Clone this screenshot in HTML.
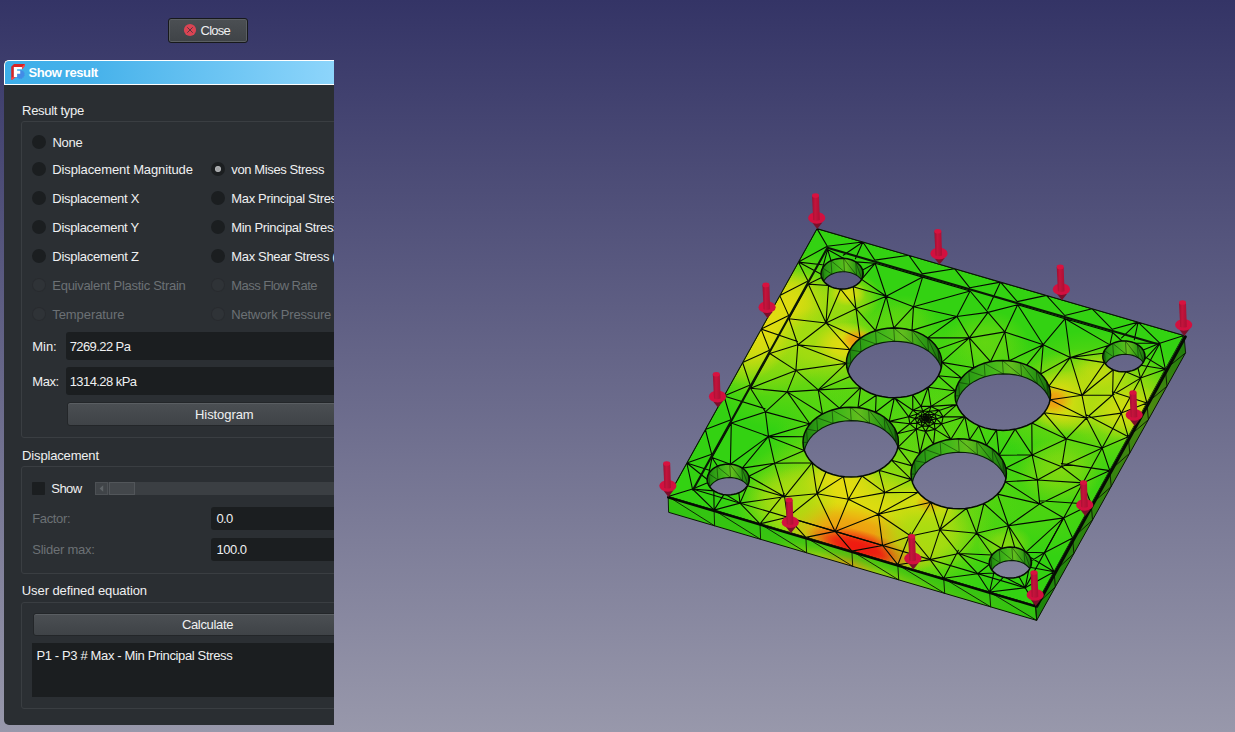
<!DOCTYPE html>
<html><head><meta charset="utf-8"><title>Show result</title>
<style>
html,body{margin:0;padding:0}
body{width:1235px;height:732px;overflow:hidden;position:relative;
 background:linear-gradient(180deg,#343466 0%,#9898ab 100%);
 font-family:'Liberation Sans', sans-serif;font-size:13px;line-height:16px}
#clip{position:absolute;left:0;top:0;width:334px;height:732px;overflow:hidden}
#panel{position:absolute;left:4px;top:60px;width:340px;height:664.5px;background:#2a2e32;border-radius:5px 0 0 5px}
#titlebar{position:absolute;left:4px;top:60px;width:340px;height:23px;border:1px solid #fff;border-right:0;
 border-radius:5px 0 0 0;background:linear-gradient(90deg,#3daee9 0%,#45b1ea 25%,#8dd5fb 100%);
 background-size:329px 100%;background-repeat:no-repeat}
.t{position:absolute;white-space:pre;line-height:16px;font-size:13px}
.gb{position:absolute;left:21px;width:340px;border:1px solid #3a3e42;border-radius:3px;background:#2b2f33;box-sizing:border-box}
.rd{position:absolute;width:14px;height:14px;border-radius:50%;background:#1b1e20;display:block}
.rd b{position:absolute;left:4px;top:4px;width:6px;height:6px;border-radius:50%;background:radial-gradient(#a2a4a6 35%,#c2c4c6 75%)}
.rd.dis{width:13.5px;height:13.5px;background:#2f3337;box-shadow:inset 0 0 0 1px #282b2f}
.inp{position:absolute;background:#1b1e20;border-radius:3px}
.btn{position:absolute;border:1px solid #232629;border-radius:3px;background:linear-gradient(180deg,#4b4f53,#3f4347);box-shadow:inset 0 1px 0 #5a5e62}
#model{position:absolute;left:0;top:0}
</style></head>
<body>
<svg id="model" width="1235" height="732" viewBox="0 0 1235 732">
<defs>
<linearGradient id="shaft" x1="0" x2="1" y1="0" y2="0"><stop offset="0" stop-color="#9c0e30"/><stop offset="0.4" stop-color="#c4143c"/><stop offset="1" stop-color="#ac0f34"/></linearGradient>
<linearGradient id="lside" gradientUnits="userSpaceOnUse" x1="668.2" y1="496.5" x2="1035.5" y2="605.6"><stop offset="0" stop-color="#2ec410"/><stop offset="0.3" stop-color="#3cc410"/><stop offset="0.42" stop-color="#9ad010"/><stop offset="0.5" stop-color="#e09a10"/><stop offset="0.58" stop-color="#9ad010"/><stop offset="0.75" stop-color="#4cc810"/><stop offset="1" stop-color="#30c010"/></linearGradient>
<linearGradient id="rside" gradientUnits="userSpaceOnUse" x1="1035.5" y1="605.6" x2="1184.0" y2="335.5"><stop offset="0" stop-color="#1d860c"/><stop offset="0.55" stop-color="#3a8410"/><stop offset="0.75" stop-color="#4a8a10"/><stop offset="1" stop-color="#1a7c0c"/></linearGradient>
<linearGradient id="lsideov" gradientUnits="userSpaceOnUse" x1="0" y1="0" x2="-4.5" y2="15.5" gradientTransform="translate(668.2 496.5)" spreadMethod="pad"><stop offset="0" stop-color="#34c412" stop-opacity="0.95"/><stop offset="0.45" stop-color="#34c412" stop-opacity="0.7"/><stop offset="1" stop-color="#34c412" stop-opacity="0"/></linearGradient>
<linearGradient id="wall" x1="0" x2="1" y1="0" y2="0"><stop offset="0" stop-color="#1d7a0e"/><stop offset="0.14" stop-color="#2c9c14"/><stop offset="0.4" stop-color="#44b81a"/><stop offset="0.58" stop-color="#62be1e"/><stop offset="0.8" stop-color="#2f9c14"/><stop offset="1" stop-color="#1a6e0c"/></linearGradient>
<radialGradient id="g0"><stop offset="0" stop-color="#74d810" stop-opacity="1"/><stop offset="0.45" stop-color="#74d810" stop-opacity="0.75"/><stop offset="1" stop-color="#74d810" stop-opacity="0"/></radialGradient>
<radialGradient id="g1"><stop offset="0" stop-color="#a8dc10" stop-opacity="1"/><stop offset="0.45" stop-color="#a8dc10" stop-opacity="0.75"/><stop offset="1" stop-color="#a8dc10" stop-opacity="0"/></radialGradient>
<radialGradient id="g2"><stop offset="0" stop-color="#e6dc10" stop-opacity="1"/><stop offset="0.45" stop-color="#e6dc10" stop-opacity="0.75"/><stop offset="1" stop-color="#e6dc10" stop-opacity="0"/></radialGradient>
<radialGradient id="g3"><stop offset="0" stop-color="#f09810" stop-opacity="1"/><stop offset="0.45" stop-color="#f09810" stop-opacity="0.75"/><stop offset="1" stop-color="#f09810" stop-opacity="0"/></radialGradient>
<radialGradient id="g4"><stop offset="0" stop-color="#ee1a10" stop-opacity="1"/><stop offset="0.45" stop-color="#ee1a10" stop-opacity="0.75"/><stop offset="1" stop-color="#ee1a10" stop-opacity="0"/></radialGradient>
<clipPath id="topclip"><path d="M817.0,228.6 L1184.0,335.5 L1035.5,605.6 L668.2,496.5ZM938.3,375.8 L935.6,379.9 L932.2,383.7 L928.1,387.2 L923.5,390.2 L918.3,392.8 L912.7,394.9 L906.8,396.4 L900.7,397.3 L894.5,397.7 L888.2,397.4 L882.1,396.6 L876.2,395.2 L870.6,393.2 L865.3,390.7 L860.6,387.7 L856.5,384.3 L853.0,380.6 L850.1,376.5 L848.1,372.2 L846.8,367.7 L846.4,363.2 L846.7,358.6 L847.9,354.2 L849.9,349.8 L852.6,345.7 L856.0,341.9 L860.1,338.4 L864.8,335.4 L869.9,332.8 L875.5,330.7 L881.4,329.2 L887.5,328.3 L893.7,327.9 L900.0,328.2 L906.1,329.0 L912.0,330.4 L917.6,332.4 L922.9,334.9 L927.6,337.8 L931.7,341.2 L935.2,345.0 L938.0,349.1 L940.1,353.4 L941.4,357.8 L941.8,362.4 L941.5,366.9 L940.3,371.4ZM1047.0,408.4 L1044.3,412.5 L1040.9,416.3 L1036.8,419.8 L1032.2,422.9 L1027.0,425.5 L1021.4,427.5 L1015.5,429.1 L1009.4,430.0 L1003.2,430.4 L997.0,430.1 L990.8,429.3 L984.9,427.9 L979.3,425.9 L974.1,423.4 L969.3,420.4 L965.2,417.0 L961.7,413.2 L958.9,409.2 L956.8,404.8 L955.5,400.4 L955.1,395.8 L955.4,391.3 L956.6,386.8 L958.6,382.4 L961.3,378.3 L964.7,374.5 L968.8,371.0 L973.4,368.0 L978.6,365.4 L984.2,363.3 L990.1,361.8 L996.2,360.8 L1002.4,360.5 L1008.6,360.7 L1014.8,361.5 L1020.7,362.9 L1026.3,364.9 L1031.5,367.4 L1036.3,370.4 L1040.4,373.8 L1043.9,377.5 L1046.7,381.6 L1048.8,385.9 L1050.1,390.4 L1050.5,395.0 L1050.2,399.5 L1049.0,404.0ZM894.9,455.2 L892.2,459.3 L888.8,463.1 L884.7,466.6 L880.1,469.6 L874.9,472.2 L869.3,474.2 L863.4,475.7 L857.3,476.7 L851.1,477.0 L844.8,476.8 L838.7,475.9 L832.8,474.5 L827.2,472.5 L821.9,470.0 L817.2,467.0 L813.1,463.6 L809.5,459.8 L806.7,455.7 L804.7,451.4 L803.4,447.0 L803.0,442.4 L803.3,437.9 L804.5,433.4 L806.5,429.0 L809.2,424.9 L812.6,421.1 L816.7,417.7 L821.3,414.6 L826.5,412.1 L832.1,410.0 L838.0,408.5 L844.1,407.6 L850.3,407.2 L856.6,407.5 L862.7,408.3 L868.6,409.7 L874.2,411.7 L879.5,414.2 L884.2,417.2 L888.3,420.6 L891.8,424.3 L894.7,428.4 L896.7,432.7 L898.0,437.2 L898.4,441.8 L898.1,446.3 L896.9,450.8ZM1002.9,486.9 L1000.2,491.0 L996.8,494.8 L992.7,498.3 L988.1,501.3 L982.9,503.9 L977.3,506.0 L971.4,507.5 L965.3,508.4 L959.1,508.8 L952.9,508.5 L946.7,507.7 L940.8,506.3 L935.2,504.3 L930.0,501.8 L925.2,498.8 L921.1,495.4 L917.6,491.6 L914.7,487.5 L912.7,483.2 L911.4,478.7 L911.0,474.1 L911.3,469.6 L912.5,465.1 L914.5,460.7 L917.2,456.6 L920.6,452.8 L924.7,449.3 L929.3,446.3 L934.5,443.7 L940.1,441.6 L946.0,440.1 L952.1,439.2 L958.3,438.8 L964.5,439.1 L970.7,439.9 L976.6,441.3 L982.2,443.3 L987.4,445.8 L992.2,448.8 L996.3,452.2 L999.8,456.0 L1002.6,460.1 L1004.7,464.4 L1006.0,468.9 L1006.4,473.4 L1006.1,478.0 L1004.9,482.5ZM861.6,279.4 L860.4,281.2 L858.9,282.9 L857.1,284.4 L855.1,285.8 L852.8,286.9 L850.3,287.8 L847.7,288.5 L845.0,288.9 L842.3,289.1 L839.5,289.0 L836.8,288.6 L834.2,288.0 L831.7,287.1 L829.4,286.0 L827.3,284.7 L825.5,283.2 L823.9,281.5 L822.7,279.8 L821.8,277.9 L821.2,275.9 L821.0,273.9 L821.2,271.9 L821.7,269.9 L822.6,268.0 L823.8,266.2 L825.3,264.5 L827.1,263.0 L829.1,261.6 L831.4,260.5 L833.9,259.6 L836.5,258.9 L839.2,258.5 L841.9,258.3 L844.7,258.4 L847.4,258.8 L850.0,259.4 L852.5,260.3 L854.8,261.4 L856.9,262.7 L858.7,264.2 L860.3,265.8 L861.5,267.6 L862.4,269.5 L863.0,271.5 L863.2,273.5 L863.0,275.5 L862.5,277.5ZM1143.4,362.1 L1142.2,363.9 L1140.7,365.6 L1138.9,367.2 L1136.9,368.5 L1134.6,369.7 L1132.1,370.6 L1129.5,371.3 L1126.8,371.7 L1124.1,371.8 L1121.3,371.7 L1118.6,371.4 L1116.0,370.8 L1113.5,369.9 L1111.2,368.8 L1109.1,367.5 L1107.3,366.0 L1105.7,364.3 L1104.5,362.5 L1103.6,360.6 L1103.0,358.6 L1102.8,356.6 L1103.0,354.6 L1103.5,352.6 L1104.4,350.7 L1105.6,348.9 L1107.1,347.2 L1108.9,345.6 L1110.9,344.3 L1113.2,343.1 L1115.7,342.2 L1118.3,341.5 L1121.0,341.1 L1123.7,341.0 L1126.5,341.1 L1129.2,341.4 L1131.8,342.0 L1134.3,342.9 L1136.6,344.0 L1138.7,345.3 L1140.5,346.8 L1142.1,348.5 L1143.3,350.3 L1144.2,352.2 L1144.8,354.2 L1145.0,356.2 L1144.8,358.2 L1144.3,360.2ZM747.7,485.3 L746.5,487.1 L745.0,488.8 L743.2,490.3 L741.2,491.6 L738.9,492.8 L736.4,493.7 L733.8,494.3 L731.1,494.8 L728.4,494.9 L725.6,494.8 L722.9,494.4 L720.3,493.8 L717.8,492.9 L715.5,491.8 L713.4,490.5 L711.6,489.0 L710.0,487.3 L708.8,485.5 L707.9,483.6 L707.3,481.6 L707.1,479.6 L707.3,477.6 L707.8,475.6 L708.7,473.7 L709.9,471.9 L711.4,470.2 L713.2,468.7 L715.2,467.4 L717.5,466.2 L720.0,465.3 L722.6,464.7 L725.3,464.3 L728.0,464.1 L730.8,464.2 L733.5,464.6 L736.1,465.2 L738.6,466.1 L740.9,467.2 L743.0,468.5 L744.8,470.0 L746.4,471.7 L747.6,473.5 L748.5,475.4 L749.1,477.4 L749.3,479.4 L749.1,481.4 L748.6,483.4ZM1029.9,568.4 L1028.7,570.2 L1027.2,571.9 L1025.4,573.4 L1023.4,574.8 L1021.1,575.9 L1018.6,576.8 L1016.0,577.5 L1013.3,577.9 L1010.6,578.1 L1007.8,578.0 L1005.1,577.6 L1002.5,577.0 L1000.0,576.1 L997.7,575.0 L995.6,573.6 L993.8,572.1 L992.2,570.5 L991.0,568.7 L990.1,566.7 L989.5,564.8 L989.3,562.7 L989.5,560.7 L990.0,558.7 L990.9,556.8 L992.1,555.0 L993.6,553.3 L995.4,551.8 L997.4,550.4 L999.7,549.3 L1002.2,548.4 L1004.8,547.7 L1007.5,547.3 L1010.2,547.1 L1013.0,547.2 L1015.7,547.6 L1018.3,548.2 L1020.8,549.1 L1023.1,550.2 L1025.2,551.6 L1027.0,553.1 L1028.6,554.7 L1029.8,556.5 L1030.7,558.5 L1031.3,560.4 L1031.5,562.5 L1031.3,564.5 L1030.8,566.5Z" clip-rule="evenodd"/></clipPath>
<clipPath id="hc0"><path d="M938.3,375.8 L935.6,379.9 L932.2,383.7 L928.1,387.2 L923.5,390.2 L918.3,392.8 L912.7,394.9 L906.8,396.4 L900.7,397.3 L894.5,397.7 L888.2,397.4 L882.1,396.6 L876.2,395.2 L870.6,393.2 L865.3,390.7 L860.6,387.7 L856.5,384.3 L853.0,380.6 L850.1,376.5 L848.1,372.2 L846.8,367.7 L846.4,363.2 L846.7,358.6 L847.9,354.2 L849.9,349.8 L852.6,345.7 L856.0,341.9 L860.1,338.4 L864.8,335.4 L869.9,332.8 L875.5,330.7 L881.4,329.2 L887.5,328.3 L893.7,327.9 L900.0,328.2 L906.1,329.0 L912.0,330.4 L917.6,332.4 L922.9,334.9 L927.6,337.8 L931.7,341.2 L935.2,345.0 L938.0,349.1 L940.1,353.4 L941.4,357.8 L941.8,362.4 L941.5,366.9 L940.3,371.4Z"/></clipPath>
<clipPath id="hc1"><path d="M1047.0,408.4 L1044.3,412.5 L1040.9,416.3 L1036.8,419.8 L1032.2,422.9 L1027.0,425.5 L1021.4,427.5 L1015.5,429.1 L1009.4,430.0 L1003.2,430.4 L997.0,430.1 L990.8,429.3 L984.9,427.9 L979.3,425.9 L974.1,423.4 L969.3,420.4 L965.2,417.0 L961.7,413.2 L958.9,409.2 L956.8,404.8 L955.5,400.4 L955.1,395.8 L955.4,391.3 L956.6,386.8 L958.6,382.4 L961.3,378.3 L964.7,374.5 L968.8,371.0 L973.4,368.0 L978.6,365.4 L984.2,363.3 L990.1,361.8 L996.2,360.8 L1002.4,360.5 L1008.6,360.7 L1014.8,361.5 L1020.7,362.9 L1026.3,364.9 L1031.5,367.4 L1036.3,370.4 L1040.4,373.8 L1043.9,377.5 L1046.7,381.6 L1048.8,385.9 L1050.1,390.4 L1050.5,395.0 L1050.2,399.5 L1049.0,404.0Z"/></clipPath>
<clipPath id="hc2"><path d="M894.9,455.2 L892.2,459.3 L888.8,463.1 L884.7,466.6 L880.1,469.6 L874.9,472.2 L869.3,474.2 L863.4,475.7 L857.3,476.7 L851.1,477.0 L844.8,476.8 L838.7,475.9 L832.8,474.5 L827.2,472.5 L821.9,470.0 L817.2,467.0 L813.1,463.6 L809.5,459.8 L806.7,455.7 L804.7,451.4 L803.4,447.0 L803.0,442.4 L803.3,437.9 L804.5,433.4 L806.5,429.0 L809.2,424.9 L812.6,421.1 L816.7,417.7 L821.3,414.6 L826.5,412.1 L832.1,410.0 L838.0,408.5 L844.1,407.6 L850.3,407.2 L856.6,407.5 L862.7,408.3 L868.6,409.7 L874.2,411.7 L879.5,414.2 L884.2,417.2 L888.3,420.6 L891.8,424.3 L894.7,428.4 L896.7,432.7 L898.0,437.2 L898.4,441.8 L898.1,446.3 L896.9,450.8Z"/></clipPath>
<clipPath id="hc3"><path d="M1002.9,486.9 L1000.2,491.0 L996.8,494.8 L992.7,498.3 L988.1,501.3 L982.9,503.9 L977.3,506.0 L971.4,507.5 L965.3,508.4 L959.1,508.8 L952.9,508.5 L946.7,507.7 L940.8,506.3 L935.2,504.3 L930.0,501.8 L925.2,498.8 L921.1,495.4 L917.6,491.6 L914.7,487.5 L912.7,483.2 L911.4,478.7 L911.0,474.1 L911.3,469.6 L912.5,465.1 L914.5,460.7 L917.2,456.6 L920.6,452.8 L924.7,449.3 L929.3,446.3 L934.5,443.7 L940.1,441.6 L946.0,440.1 L952.1,439.2 L958.3,438.8 L964.5,439.1 L970.7,439.9 L976.6,441.3 L982.2,443.3 L987.4,445.8 L992.2,448.8 L996.3,452.2 L999.8,456.0 L1002.6,460.1 L1004.7,464.4 L1006.0,468.9 L1006.4,473.4 L1006.1,478.0 L1004.9,482.5Z"/></clipPath>
<clipPath id="hc4"><path d="M861.6,279.4 L860.4,281.2 L858.9,282.9 L857.1,284.4 L855.1,285.8 L852.8,286.9 L850.3,287.8 L847.7,288.5 L845.0,288.9 L842.3,289.1 L839.5,289.0 L836.8,288.6 L834.2,288.0 L831.7,287.1 L829.4,286.0 L827.3,284.7 L825.5,283.2 L823.9,281.5 L822.7,279.8 L821.8,277.9 L821.2,275.9 L821.0,273.9 L821.2,271.9 L821.7,269.9 L822.6,268.0 L823.8,266.2 L825.3,264.5 L827.1,263.0 L829.1,261.6 L831.4,260.5 L833.9,259.6 L836.5,258.9 L839.2,258.5 L841.9,258.3 L844.7,258.4 L847.4,258.8 L850.0,259.4 L852.5,260.3 L854.8,261.4 L856.9,262.7 L858.7,264.2 L860.3,265.8 L861.5,267.6 L862.4,269.5 L863.0,271.5 L863.2,273.5 L863.0,275.5 L862.5,277.5Z"/></clipPath>
<clipPath id="hc5"><path d="M1143.4,362.1 L1142.2,363.9 L1140.7,365.6 L1138.9,367.2 L1136.9,368.5 L1134.6,369.7 L1132.1,370.6 L1129.5,371.3 L1126.8,371.7 L1124.1,371.8 L1121.3,371.7 L1118.6,371.4 L1116.0,370.8 L1113.5,369.9 L1111.2,368.8 L1109.1,367.5 L1107.3,366.0 L1105.7,364.3 L1104.5,362.5 L1103.6,360.6 L1103.0,358.6 L1102.8,356.6 L1103.0,354.6 L1103.5,352.6 L1104.4,350.7 L1105.6,348.9 L1107.1,347.2 L1108.9,345.6 L1110.9,344.3 L1113.2,343.1 L1115.7,342.2 L1118.3,341.5 L1121.0,341.1 L1123.7,341.0 L1126.5,341.1 L1129.2,341.4 L1131.8,342.0 L1134.3,342.9 L1136.6,344.0 L1138.7,345.3 L1140.5,346.8 L1142.1,348.5 L1143.3,350.3 L1144.2,352.2 L1144.8,354.2 L1145.0,356.2 L1144.8,358.2 L1144.3,360.2Z"/></clipPath>
<clipPath id="hc6"><path d="M747.7,485.3 L746.5,487.1 L745.0,488.8 L743.2,490.3 L741.2,491.6 L738.9,492.8 L736.4,493.7 L733.8,494.3 L731.1,494.8 L728.4,494.9 L725.6,494.8 L722.9,494.4 L720.3,493.8 L717.8,492.9 L715.5,491.8 L713.4,490.5 L711.6,489.0 L710.0,487.3 L708.8,485.5 L707.9,483.6 L707.3,481.6 L707.1,479.6 L707.3,477.6 L707.8,475.6 L708.7,473.7 L709.9,471.9 L711.4,470.2 L713.2,468.7 L715.2,467.4 L717.5,466.2 L720.0,465.3 L722.6,464.7 L725.3,464.3 L728.0,464.1 L730.8,464.2 L733.5,464.6 L736.1,465.2 L738.6,466.1 L740.9,467.2 L743.0,468.5 L744.8,470.0 L746.4,471.7 L747.6,473.5 L748.5,475.4 L749.1,477.4 L749.3,479.4 L749.1,481.4 L748.6,483.4Z"/></clipPath>
<clipPath id="hc7"><path d="M1029.9,568.4 L1028.7,570.2 L1027.2,571.9 L1025.4,573.4 L1023.4,574.8 L1021.1,575.9 L1018.6,576.8 L1016.0,577.5 L1013.3,577.9 L1010.6,578.1 L1007.8,578.0 L1005.1,577.6 L1002.5,577.0 L1000.0,576.1 L997.7,575.0 L995.6,573.6 L993.8,572.1 L992.2,570.5 L991.0,568.7 L990.1,566.7 L989.5,564.8 L989.3,562.7 L989.5,560.7 L990.0,558.7 L990.9,556.8 L992.1,555.0 L993.6,553.3 L995.4,551.8 L997.4,550.4 L999.7,549.3 L1002.2,548.4 L1004.8,547.7 L1007.5,547.3 L1010.2,547.1 L1013.0,547.2 L1015.7,547.6 L1018.3,548.2 L1020.8,549.1 L1023.1,550.2 L1025.2,551.6 L1027.0,553.1 L1028.6,554.7 L1029.8,556.5 L1030.7,558.5 L1031.3,560.4 L1031.5,562.5 L1031.3,564.5 L1030.8,566.5Z"/></clipPath>
</defs>
<path d="M668.2,496.5 L1035.5,605.6 L1036.7,620.4 L668.6,512.3Z" fill="url(#lside)"/>
<path d="M668.2,496.5 L1035.5,605.6 L1036.7,620.4 L668.6,512.3Z" fill="url(#lsideov)"/>
<path d="M1035.5,605.6 L1184.0,335.5 L1185.6,352.8 L1036.7,620.4Z" fill="url(#rside)"/>
<path d="M817.0,228.6 L1184.0,335.5 L1035.5,605.6 L668.2,496.5ZM938.3,375.8 L935.6,379.9 L932.2,383.7 L928.1,387.2 L923.5,390.2 L918.3,392.8 L912.7,394.9 L906.8,396.4 L900.7,397.3 L894.5,397.7 L888.2,397.4 L882.1,396.6 L876.2,395.2 L870.6,393.2 L865.3,390.7 L860.6,387.7 L856.5,384.3 L853.0,380.6 L850.1,376.5 L848.1,372.2 L846.8,367.7 L846.4,363.2 L846.7,358.6 L847.9,354.2 L849.9,349.8 L852.6,345.7 L856.0,341.9 L860.1,338.4 L864.8,335.4 L869.9,332.8 L875.5,330.7 L881.4,329.2 L887.5,328.3 L893.7,327.9 L900.0,328.2 L906.1,329.0 L912.0,330.4 L917.6,332.4 L922.9,334.9 L927.6,337.8 L931.7,341.2 L935.2,345.0 L938.0,349.1 L940.1,353.4 L941.4,357.8 L941.8,362.4 L941.5,366.9 L940.3,371.4ZM1047.0,408.4 L1044.3,412.5 L1040.9,416.3 L1036.8,419.8 L1032.2,422.9 L1027.0,425.5 L1021.4,427.5 L1015.5,429.1 L1009.4,430.0 L1003.2,430.4 L997.0,430.1 L990.8,429.3 L984.9,427.9 L979.3,425.9 L974.1,423.4 L969.3,420.4 L965.2,417.0 L961.7,413.2 L958.9,409.2 L956.8,404.8 L955.5,400.4 L955.1,395.8 L955.4,391.3 L956.6,386.8 L958.6,382.4 L961.3,378.3 L964.7,374.5 L968.8,371.0 L973.4,368.0 L978.6,365.4 L984.2,363.3 L990.1,361.8 L996.2,360.8 L1002.4,360.5 L1008.6,360.7 L1014.8,361.5 L1020.7,362.9 L1026.3,364.9 L1031.5,367.4 L1036.3,370.4 L1040.4,373.8 L1043.9,377.5 L1046.7,381.6 L1048.8,385.9 L1050.1,390.4 L1050.5,395.0 L1050.2,399.5 L1049.0,404.0ZM894.9,455.2 L892.2,459.3 L888.8,463.1 L884.7,466.6 L880.1,469.6 L874.9,472.2 L869.3,474.2 L863.4,475.7 L857.3,476.7 L851.1,477.0 L844.8,476.8 L838.7,475.9 L832.8,474.5 L827.2,472.5 L821.9,470.0 L817.2,467.0 L813.1,463.6 L809.5,459.8 L806.7,455.7 L804.7,451.4 L803.4,447.0 L803.0,442.4 L803.3,437.9 L804.5,433.4 L806.5,429.0 L809.2,424.9 L812.6,421.1 L816.7,417.7 L821.3,414.6 L826.5,412.1 L832.1,410.0 L838.0,408.5 L844.1,407.6 L850.3,407.2 L856.6,407.5 L862.7,408.3 L868.6,409.7 L874.2,411.7 L879.5,414.2 L884.2,417.2 L888.3,420.6 L891.8,424.3 L894.7,428.4 L896.7,432.7 L898.0,437.2 L898.4,441.8 L898.1,446.3 L896.9,450.8ZM1002.9,486.9 L1000.2,491.0 L996.8,494.8 L992.7,498.3 L988.1,501.3 L982.9,503.9 L977.3,506.0 L971.4,507.5 L965.3,508.4 L959.1,508.8 L952.9,508.5 L946.7,507.7 L940.8,506.3 L935.2,504.3 L930.0,501.8 L925.2,498.8 L921.1,495.4 L917.6,491.6 L914.7,487.5 L912.7,483.2 L911.4,478.7 L911.0,474.1 L911.3,469.6 L912.5,465.1 L914.5,460.7 L917.2,456.6 L920.6,452.8 L924.7,449.3 L929.3,446.3 L934.5,443.7 L940.1,441.6 L946.0,440.1 L952.1,439.2 L958.3,438.8 L964.5,439.1 L970.7,439.9 L976.6,441.3 L982.2,443.3 L987.4,445.8 L992.2,448.8 L996.3,452.2 L999.8,456.0 L1002.6,460.1 L1004.7,464.4 L1006.0,468.9 L1006.4,473.4 L1006.1,478.0 L1004.9,482.5ZM861.6,279.4 L860.4,281.2 L858.9,282.9 L857.1,284.4 L855.1,285.8 L852.8,286.9 L850.3,287.8 L847.7,288.5 L845.0,288.9 L842.3,289.1 L839.5,289.0 L836.8,288.6 L834.2,288.0 L831.7,287.1 L829.4,286.0 L827.3,284.7 L825.5,283.2 L823.9,281.5 L822.7,279.8 L821.8,277.9 L821.2,275.9 L821.0,273.9 L821.2,271.9 L821.7,269.9 L822.6,268.0 L823.8,266.2 L825.3,264.5 L827.1,263.0 L829.1,261.6 L831.4,260.5 L833.9,259.6 L836.5,258.9 L839.2,258.5 L841.9,258.3 L844.7,258.4 L847.4,258.8 L850.0,259.4 L852.5,260.3 L854.8,261.4 L856.9,262.7 L858.7,264.2 L860.3,265.8 L861.5,267.6 L862.4,269.5 L863.0,271.5 L863.2,273.5 L863.0,275.5 L862.5,277.5ZM1143.4,362.1 L1142.2,363.9 L1140.7,365.6 L1138.9,367.2 L1136.9,368.5 L1134.6,369.7 L1132.1,370.6 L1129.5,371.3 L1126.8,371.7 L1124.1,371.8 L1121.3,371.7 L1118.6,371.4 L1116.0,370.8 L1113.5,369.9 L1111.2,368.8 L1109.1,367.5 L1107.3,366.0 L1105.7,364.3 L1104.5,362.5 L1103.6,360.6 L1103.0,358.6 L1102.8,356.6 L1103.0,354.6 L1103.5,352.6 L1104.4,350.7 L1105.6,348.9 L1107.1,347.2 L1108.9,345.6 L1110.9,344.3 L1113.2,343.1 L1115.7,342.2 L1118.3,341.5 L1121.0,341.1 L1123.7,341.0 L1126.5,341.1 L1129.2,341.4 L1131.8,342.0 L1134.3,342.9 L1136.6,344.0 L1138.7,345.3 L1140.5,346.8 L1142.1,348.5 L1143.3,350.3 L1144.2,352.2 L1144.8,354.2 L1145.0,356.2 L1144.8,358.2 L1144.3,360.2ZM747.7,485.3 L746.5,487.1 L745.0,488.8 L743.2,490.3 L741.2,491.6 L738.9,492.8 L736.4,493.7 L733.8,494.3 L731.1,494.8 L728.4,494.9 L725.6,494.8 L722.9,494.4 L720.3,493.8 L717.8,492.9 L715.5,491.8 L713.4,490.5 L711.6,489.0 L710.0,487.3 L708.8,485.5 L707.9,483.6 L707.3,481.6 L707.1,479.6 L707.3,477.6 L707.8,475.6 L708.7,473.7 L709.9,471.9 L711.4,470.2 L713.2,468.7 L715.2,467.4 L717.5,466.2 L720.0,465.3 L722.6,464.7 L725.3,464.3 L728.0,464.1 L730.8,464.2 L733.5,464.6 L736.1,465.2 L738.6,466.1 L740.9,467.2 L743.0,468.5 L744.8,470.0 L746.4,471.7 L747.6,473.5 L748.5,475.4 L749.1,477.4 L749.3,479.4 L749.1,481.4 L748.6,483.4ZM1029.9,568.4 L1028.7,570.2 L1027.2,571.9 L1025.4,573.4 L1023.4,574.8 L1021.1,575.9 L1018.6,576.8 L1016.0,577.5 L1013.3,577.9 L1010.6,578.1 L1007.8,578.0 L1005.1,577.6 L1002.5,577.0 L1000.0,576.1 L997.7,575.0 L995.6,573.6 L993.8,572.1 L992.2,570.5 L991.0,568.7 L990.1,566.7 L989.5,564.8 L989.3,562.7 L989.5,560.7 L990.0,558.7 L990.9,556.8 L992.1,555.0 L993.6,553.3 L995.4,551.8 L997.4,550.4 L999.7,549.3 L1002.2,548.4 L1004.8,547.7 L1007.5,547.3 L1010.2,547.1 L1013.0,547.2 L1015.7,547.6 L1018.3,548.2 L1020.8,549.1 L1023.1,550.2 L1025.2,551.6 L1027.0,553.1 L1028.6,554.7 L1029.8,556.5 L1030.7,558.5 L1031.3,560.4 L1031.5,562.5 L1031.3,564.5 L1030.8,566.5Z" fill-rule="evenodd" fill="#33d212"/>
<g clip-path="url(#topclip)"><g transform="matrix(367.00,106.90,-148.80,267.90,817.00,228.60)">
<ellipse cx="0.1118" cy="0.3899" rx="0.3000" ry="0.3000" fill="url(#g0)" opacity="1.0"/>
<ellipse cx="0.4974" cy="0.8706" rx="0.3800" ry="0.3800" fill="url(#g0)" opacity="1.0"/>
<ellipse cx="0.8818" cy="0.3066" rx="0.2600" ry="0.2600" fill="url(#g0)" opacity="1.0"/>
<ellipse cx="0.8766" cy="0.6633" rx="0.2000" ry="0.2000" fill="url(#g0)" opacity="0.4"/>
<ellipse cx="0.5261" cy="0.5045" rx="0.1400" ry="0.1400" fill="url(#g0)" opacity="0.5"/>
<ellipse cx="0.3557" cy="0.3598" rx="0.2000" ry="0.2000" fill="url(#g0)" opacity="0.6"/>
<ellipse cx="0.6530" cy="0.3606" rx="0.2000" ry="0.2000" fill="url(#g0)" opacity="0.55"/>
<ellipse cx="0.3577" cy="0.6538" rx="0.2000" ry="0.2000" fill="url(#g0)" opacity="0.6"/>
<ellipse cx="0.6264" cy="0.6511" rx="0.1800" ry="0.1800" fill="url(#g0)" opacity="0.4"/>
<ellipse cx="0.5417" cy="0.2071" rx="0.1100" ry="0.1100" fill="url(#g0)" opacity="0.7"/>
<ellipse cx="0.3229" cy="0.2049" rx="0.0800" ry="0.0800" fill="url(#g0)" opacity="0.5"/>
<ellipse cx="0.4818" cy="0.8656" rx="0.3400" ry="0.2500" fill="url(#g1)" opacity="1"/>
<ellipse cx="0.4732" cy="0.8915" rx="0.2700" ry="0.1800" fill="url(#g2)" opacity="1"/>
<ellipse cx="0.5013" cy="0.9474" rx="0.2200" ry="0.1000" fill="url(#g3)" opacity="1"/>
<ellipse cx="0.5180" cy="0.9818" rx="0.1500" ry="0.0550" fill="url(#g4)" opacity="1"/>
<ellipse cx="0.5146" cy="0.9869" rx="0.1000" ry="0.0350" fill="url(#g4)" opacity="1"/>
<ellipse cx="0.3866" cy="0.7991" rx="0.1000" ry="0.1000" fill="url(#g2)" opacity="1"/>
<ellipse cx="0.6217" cy="0.7874" rx="0.0900" ry="0.0900" fill="url(#g2)" opacity="1"/>
<ellipse cx="0.6214" cy="0.7800" rx="0.0350" ry="0.0350" fill="url(#g3)" opacity="0.9"/>
<ellipse cx="0.2902" cy="0.8973" rx="0.1200" ry="0.1200" fill="url(#g1)" opacity="0.9"/>
<ellipse cx="0.6524" cy="0.8834" rx="0.1300" ry="0.1300" fill="url(#g1)" opacity="1"/>
<ellipse cx="0.0161" cy="0.3422" rx="0.2000" ry="0.2700" fill="url(#g1)" opacity="1"/>
<ellipse cx="0.0013" cy="0.3593" rx="0.1000" ry="0.2200" fill="url(#g2)" opacity="1"/>
<ellipse cx="0.0414" cy="0.2500" rx="0.1000" ry="0.1000" fill="url(#g2)" opacity="0.7"/>
<ellipse cx="0.1774" cy="0.3637" rx="0.1400" ry="0.1400" fill="url(#g1)" opacity="1"/>
<ellipse cx="0.2196" cy="0.3468" rx="0.0800" ry="0.0800" fill="url(#g2)" opacity="1"/>
<ellipse cx="0.2389" cy="0.3205" rx="0.0400" ry="0.0400" fill="url(#g3)" opacity="1"/>
<ellipse cx="0.1548" cy="0.1936" rx="0.0900" ry="0.0900" fill="url(#g1)" opacity="1"/>
<ellipse cx="0.1566" cy="0.1779" rx="0.0450" ry="0.0450" fill="url(#g2)" opacity="0.9"/>
<ellipse cx="0.8250" cy="0.2807" rx="0.1500" ry="0.1500" fill="url(#g1)" opacity="1"/>
<ellipse cx="0.8052" cy="0.3260" rx="0.1100" ry="0.1100" fill="url(#g2)" opacity="1"/>
<ellipse cx="0.7791" cy="0.3289" rx="0.0500" ry="0.0500" fill="url(#g3)" opacity="1"/>
<ellipse cx="0.9339" cy="0.2671" rx="0.1600" ry="0.1600" fill="url(#g1)" opacity="1"/>
<ellipse cx="0.9683" cy="0.2982" rx="0.1000" ry="0.1000" fill="url(#g2)" opacity="0.7"/>
<ellipse cx="0.8526" cy="0.1876" rx="0.0800" ry="0.0800" fill="url(#g2)" opacity="0.5"/>
<ellipse cx="0.8844" cy="0.5482" rx="0.1100" ry="0.1100" fill="url(#g1)" opacity="0.6"/>
<ellipse cx="0.8531" cy="0.8406" rx="0.0700" ry="0.0700" fill="url(#g1)" opacity="0.7"/>
</g></g>
<g clip-path="url(#hc0)"><path d="M938.3,375.8 L935.6,379.9 L932.2,383.7 L928.1,387.2 L923.5,390.2 L918.3,392.8 L912.7,394.9 L906.8,396.4 L900.7,397.3 L894.5,397.7 L888.2,397.4 L882.1,396.6 L876.2,395.2 L870.6,393.2 L865.3,390.7 L860.6,387.7 L856.5,384.3 L853.0,380.6 L850.1,376.5 L848.1,372.2 L846.8,367.7 L846.4,363.2 L846.7,358.6 L847.9,354.2 L849.9,349.8 L852.6,345.7 L856.0,341.9 L860.1,338.4 L864.8,335.4 L869.9,332.8 L875.5,330.7 L881.4,329.2 L887.5,328.3 L893.7,327.9 L900.0,328.2 L906.1,329.0 L912.0,330.4 L917.6,332.4 L922.9,334.9 L927.6,337.8 L931.7,341.2 L935.2,345.0 L938.0,349.1 L940.1,353.4 L941.4,357.8 L941.8,362.4 L941.5,366.9 L940.3,371.4ZM939.2,389.2 L936.5,393.3 L933.1,397.1 L929.0,400.6 L924.4,403.6 L919.2,406.2 L913.6,408.3 L907.7,409.8 L901.6,410.7 L895.4,411.1 L889.1,410.8 L883.0,410.0 L877.1,408.6 L871.5,406.6 L866.2,404.1 L861.5,401.1 L857.4,397.7 L853.9,394.0 L851.0,389.9 L849.0,385.6 L847.7,381.1 L847.3,376.6 L847.6,372.0 L848.8,367.6 L850.8,363.2 L853.5,359.1 L856.9,355.3 L861.0,351.8 L865.7,348.8 L870.8,346.2 L876.4,344.1 L882.3,342.6 L888.4,341.7 L894.6,341.3 L900.9,341.6 L907.0,342.4 L912.9,343.8 L918.5,345.8 L923.8,348.3 L928.5,351.2 L932.6,354.6 L936.1,358.4 L938.9,362.5 L941.0,366.8 L942.3,371.2 L942.7,375.8 L942.4,380.3 L941.2,384.8Z" fill-rule="evenodd" fill="url(#wall)"/>
<path d="M938.3,375.8 L939.2,389.2 M938.3,375.8 L929.0,400.6 M928.1,387.2 L929.0,400.6 M928.1,387.2 L913.6,408.3 M912.7,394.9 L913.6,408.3 M912.7,394.9 L895.4,411.1 M894.5,397.7 L895.4,411.1 M894.5,397.7 L877.1,408.6 M876.2,395.2 L877.1,408.6 M876.2,395.2 L861.5,401.1 M860.6,387.7 L861.5,401.1 M860.6,387.7 L851.0,389.9 M850.1,376.5 L851.0,389.9 M850.1,376.5 L847.3,376.6 M846.4,363.2 L847.3,376.6 M846.4,363.2 L850.8,363.2 M849.9,349.8 L850.8,363.2 M849.9,349.8 L861.0,351.8 M860.1,338.4 L861.0,351.8 M860.1,338.4 L876.4,344.1 M875.5,330.7 L876.4,344.1 M875.5,330.7 L894.6,341.3 M893.7,327.9 L894.6,341.3 M893.7,327.9 L912.9,343.8 M912.0,330.4 L912.9,343.8 M912.0,330.4 L928.5,351.2 M927.6,337.8 L928.5,351.2 M927.6,337.8 L938.9,362.5 M938.0,349.1 L938.9,362.5 M938.0,349.1 L942.7,375.8 M941.8,362.4 L942.7,375.8 M941.8,362.4 L939.2,389.2" stroke="#061a04" stroke-width="0.8" fill="none" opacity="0.6"/>
<path d="M939.2,389.2 L936.5,393.3 L933.1,397.1 L929.0,400.6 L924.4,403.6 L919.2,406.2 L913.6,408.3 L907.7,409.8 L901.6,410.7 L895.4,411.1 L889.1,410.8 L883.0,410.0 L877.1,408.6 L871.5,406.6 L866.2,404.1 L861.5,401.1 L857.4,397.7 L853.9,394.0 L851.0,389.9 L849.0,385.6 L847.7,381.1 L847.3,376.6 L847.6,372.0 L848.8,367.6 L850.8,363.2 L853.5,359.1 L856.9,355.3 L861.0,351.8 L865.7,348.8 L870.8,346.2 L876.4,344.1 L882.3,342.6 L888.4,341.7 L894.6,341.3 L900.9,341.6 L907.0,342.4 L912.9,343.8 L918.5,345.8 L923.8,348.3 L928.5,351.2 L932.6,354.6 L936.1,358.4 L938.9,362.5 L941.0,366.8 L942.3,371.2 L942.7,375.8 L942.4,380.3 L941.2,384.8Z" stroke="#082006" stroke-width="1.1" fill="none"/>
</g>
<g clip-path="url(#hc1)"><path d="M1047.0,408.4 L1044.3,412.5 L1040.9,416.3 L1036.8,419.8 L1032.2,422.9 L1027.0,425.5 L1021.4,427.5 L1015.5,429.1 L1009.4,430.0 L1003.2,430.4 L997.0,430.1 L990.8,429.3 L984.9,427.9 L979.3,425.9 L974.1,423.4 L969.3,420.4 L965.2,417.0 L961.7,413.2 L958.9,409.2 L956.8,404.8 L955.5,400.4 L955.1,395.8 L955.4,391.3 L956.6,386.8 L958.6,382.4 L961.3,378.3 L964.7,374.5 L968.8,371.0 L973.4,368.0 L978.6,365.4 L984.2,363.3 L990.1,361.8 L996.2,360.8 L1002.4,360.5 L1008.6,360.7 L1014.8,361.5 L1020.7,362.9 L1026.3,364.9 L1031.5,367.4 L1036.3,370.4 L1040.4,373.8 L1043.9,377.5 L1046.7,381.6 L1048.8,385.9 L1050.1,390.4 L1050.5,395.0 L1050.2,399.5 L1049.0,404.0ZM1047.9,421.8 L1045.2,425.9 L1041.8,429.7 L1037.7,433.2 L1033.1,436.3 L1027.9,438.9 L1022.3,440.9 L1016.4,442.5 L1010.3,443.4 L1004.1,443.8 L997.9,443.5 L991.7,442.7 L985.8,441.3 L980.2,439.3 L975.0,436.8 L970.2,433.8 L966.1,430.4 L962.6,426.6 L959.8,422.6 L957.7,418.2 L956.4,413.8 L956.0,409.2 L956.3,404.7 L957.5,400.2 L959.5,395.8 L962.2,391.7 L965.6,387.9 L969.7,384.4 L974.3,381.4 L979.5,378.8 L985.1,376.7 L991.0,375.2 L997.1,374.2 L1003.3,373.9 L1009.5,374.1 L1015.7,374.9 L1021.6,376.3 L1027.2,378.3 L1032.4,380.8 L1037.2,383.8 L1041.3,387.2 L1044.8,390.9 L1047.6,395.0 L1049.7,399.3 L1051.0,403.8 L1051.4,408.4 L1051.1,412.9 L1049.9,417.4Z" fill-rule="evenodd" fill="url(#wall)"/>
<path d="M1047.0,408.4 L1047.9,421.8 M1047.0,408.4 L1037.7,433.2 M1036.8,419.8 L1037.7,433.2 M1036.8,419.8 L1022.3,440.9 M1021.4,427.5 L1022.3,440.9 M1021.4,427.5 L1004.1,443.8 M1003.2,430.4 L1004.1,443.8 M1003.2,430.4 L985.8,441.3 M984.9,427.9 L985.8,441.3 M984.9,427.9 L970.2,433.8 M969.3,420.4 L970.2,433.8 M969.3,420.4 L959.8,422.6 M958.9,409.2 L959.8,422.6 M958.9,409.2 L956.0,409.2 M955.1,395.8 L956.0,409.2 M955.1,395.8 L959.5,395.8 M958.6,382.4 L959.5,395.8 M958.6,382.4 L969.7,384.4 M968.8,371.0 L969.7,384.4 M968.8,371.0 L985.1,376.7 M984.2,363.3 L985.1,376.7 M984.2,363.3 L1003.3,373.9 M1002.4,360.5 L1003.3,373.9 M1002.4,360.5 L1021.6,376.3 M1020.7,362.9 L1021.6,376.3 M1020.7,362.9 L1037.2,383.8 M1036.3,370.4 L1037.2,383.8 M1036.3,370.4 L1047.6,395.0 M1046.7,381.6 L1047.6,395.0 M1046.7,381.6 L1051.4,408.4 M1050.5,395.0 L1051.4,408.4 M1050.5,395.0 L1047.9,421.8" stroke="#061a04" stroke-width="0.8" fill="none" opacity="0.6"/>
<path d="M1047.9,421.8 L1045.2,425.9 L1041.8,429.7 L1037.7,433.2 L1033.1,436.3 L1027.9,438.9 L1022.3,440.9 L1016.4,442.5 L1010.3,443.4 L1004.1,443.8 L997.9,443.5 L991.7,442.7 L985.8,441.3 L980.2,439.3 L975.0,436.8 L970.2,433.8 L966.1,430.4 L962.6,426.6 L959.8,422.6 L957.7,418.2 L956.4,413.8 L956.0,409.2 L956.3,404.7 L957.5,400.2 L959.5,395.8 L962.2,391.7 L965.6,387.9 L969.7,384.4 L974.3,381.4 L979.5,378.8 L985.1,376.7 L991.0,375.2 L997.1,374.2 L1003.3,373.9 L1009.5,374.1 L1015.7,374.9 L1021.6,376.3 L1027.2,378.3 L1032.4,380.8 L1037.2,383.8 L1041.3,387.2 L1044.8,390.9 L1047.6,395.0 L1049.7,399.3 L1051.0,403.8 L1051.4,408.4 L1051.1,412.9 L1049.9,417.4Z" stroke="#082006" stroke-width="1.1" fill="none"/>
</g>
<g clip-path="url(#hc2)"><path d="M894.9,455.2 L892.2,459.3 L888.8,463.1 L884.7,466.6 L880.1,469.6 L874.9,472.2 L869.3,474.2 L863.4,475.7 L857.3,476.7 L851.1,477.0 L844.8,476.8 L838.7,475.9 L832.8,474.5 L827.2,472.5 L821.9,470.0 L817.2,467.0 L813.1,463.6 L809.5,459.8 L806.7,455.7 L804.7,451.4 L803.4,447.0 L803.0,442.4 L803.3,437.9 L804.5,433.4 L806.5,429.0 L809.2,424.9 L812.6,421.1 L816.7,417.7 L821.3,414.6 L826.5,412.1 L832.1,410.0 L838.0,408.5 L844.1,407.6 L850.3,407.2 L856.6,407.5 L862.7,408.3 L868.6,409.7 L874.2,411.7 L879.5,414.2 L884.2,417.2 L888.3,420.6 L891.8,424.3 L894.7,428.4 L896.7,432.7 L898.0,437.2 L898.4,441.8 L898.1,446.3 L896.9,450.8ZM895.8,468.6 L893.1,472.7 L889.7,476.5 L885.6,480.0 L881.0,483.0 L875.8,485.6 L870.2,487.6 L864.3,489.1 L858.2,490.1 L852.0,490.4 L845.7,490.2 L839.6,489.3 L833.7,487.9 L828.1,485.9 L822.8,483.4 L818.1,480.4 L814.0,477.0 L810.4,473.2 L807.6,469.1 L805.6,464.8 L804.3,460.4 L803.9,455.8 L804.2,451.3 L805.4,446.8 L807.4,442.4 L810.1,438.3 L813.5,434.5 L817.6,431.1 L822.2,428.0 L827.4,425.5 L833.0,423.4 L838.9,421.9 L845.0,421.0 L851.2,420.6 L857.5,420.9 L863.6,421.7 L869.5,423.1 L875.1,425.1 L880.4,427.6 L885.1,430.6 L889.2,434.0 L892.7,437.7 L895.6,441.8 L897.6,446.1 L898.9,450.6 L899.3,455.2 L899.0,459.7 L897.8,464.2Z" fill-rule="evenodd" fill="url(#wall)"/>
<path d="M894.9,455.2 L895.8,468.6 M894.9,455.2 L885.6,480.0 M884.7,466.6 L885.6,480.0 M884.7,466.6 L870.2,487.6 M869.3,474.2 L870.2,487.6 M869.3,474.2 L852.0,490.4 M851.1,477.0 L852.0,490.4 M851.1,477.0 L833.7,487.9 M832.8,474.5 L833.7,487.9 M832.8,474.5 L818.1,480.4 M817.2,467.0 L818.1,480.4 M817.2,467.0 L807.6,469.1 M806.7,455.7 L807.6,469.1 M806.7,455.7 L803.9,455.8 M803.0,442.4 L803.9,455.8 M803.0,442.4 L807.4,442.4 M806.5,429.0 L807.4,442.4 M806.5,429.0 L817.6,431.1 M816.7,417.7 L817.6,431.1 M816.7,417.7 L833.0,423.4 M832.1,410.0 L833.0,423.4 M832.1,410.0 L851.2,420.6 M850.3,407.2 L851.2,420.6 M850.3,407.2 L869.5,423.1 M868.6,409.7 L869.5,423.1 M868.6,409.7 L885.1,430.6 M884.2,417.2 L885.1,430.6 M884.2,417.2 L895.6,441.8 M894.7,428.4 L895.6,441.8 M894.7,428.4 L899.3,455.2 M898.4,441.8 L899.3,455.2 M898.4,441.8 L895.8,468.6" stroke="#061a04" stroke-width="0.8" fill="none" opacity="0.6"/>
<path d="M895.8,468.6 L893.1,472.7 L889.7,476.5 L885.6,480.0 L881.0,483.0 L875.8,485.6 L870.2,487.6 L864.3,489.1 L858.2,490.1 L852.0,490.4 L845.7,490.2 L839.6,489.3 L833.7,487.9 L828.1,485.9 L822.8,483.4 L818.1,480.4 L814.0,477.0 L810.4,473.2 L807.6,469.1 L805.6,464.8 L804.3,460.4 L803.9,455.8 L804.2,451.3 L805.4,446.8 L807.4,442.4 L810.1,438.3 L813.5,434.5 L817.6,431.1 L822.2,428.0 L827.4,425.5 L833.0,423.4 L838.9,421.9 L845.0,421.0 L851.2,420.6 L857.5,420.9 L863.6,421.7 L869.5,423.1 L875.1,425.1 L880.4,427.6 L885.1,430.6 L889.2,434.0 L892.7,437.7 L895.6,441.8 L897.6,446.1 L898.9,450.6 L899.3,455.2 L899.0,459.7 L897.8,464.2Z" stroke="#082006" stroke-width="1.1" fill="none"/>
</g>
<g clip-path="url(#hc3)"><path d="M1002.9,486.9 L1000.2,491.0 L996.8,494.8 L992.7,498.3 L988.1,501.3 L982.9,503.9 L977.3,506.0 L971.4,507.5 L965.3,508.4 L959.1,508.8 L952.9,508.5 L946.7,507.7 L940.8,506.3 L935.2,504.3 L930.0,501.8 L925.2,498.8 L921.1,495.4 L917.6,491.6 L914.7,487.5 L912.7,483.2 L911.4,478.7 L911.0,474.1 L911.3,469.6 L912.5,465.1 L914.5,460.7 L917.2,456.6 L920.6,452.8 L924.7,449.3 L929.3,446.3 L934.5,443.7 L940.1,441.6 L946.0,440.1 L952.1,439.2 L958.3,438.8 L964.5,439.1 L970.7,439.9 L976.6,441.3 L982.2,443.3 L987.4,445.8 L992.2,448.8 L996.3,452.2 L999.8,456.0 L1002.6,460.1 L1004.7,464.4 L1006.0,468.9 L1006.4,473.4 L1006.1,478.0 L1004.9,482.5ZM1003.8,500.3 L1001.1,504.4 L997.7,508.2 L993.6,511.7 L989.0,514.7 L983.8,517.3 L978.2,519.4 L972.3,520.9 L966.2,521.8 L960.0,522.2 L953.8,521.9 L947.6,521.1 L941.7,519.7 L936.1,517.7 L930.9,515.2 L926.1,512.2 L922.0,508.8 L918.5,505.0 L915.6,500.9 L913.6,496.6 L912.3,492.1 L911.9,487.5 L912.2,483.0 L913.4,478.5 L915.4,474.1 L918.1,470.0 L921.5,466.2 L925.6,462.7 L930.2,459.7 L935.4,457.1 L941.0,455.0 L946.9,453.5 L953.0,452.6 L959.2,452.2 L965.4,452.5 L971.6,453.3 L977.5,454.7 L983.1,456.7 L988.3,459.2 L993.1,462.2 L997.2,465.6 L1000.7,469.4 L1003.5,473.5 L1005.6,477.8 L1006.9,482.3 L1007.3,486.8 L1007.0,491.4 L1005.8,495.9Z" fill-rule="evenodd" fill="url(#wall)"/>
<path d="M1002.9,486.9 L1003.8,500.3 M1002.9,486.9 L993.6,511.7 M992.7,498.3 L993.6,511.7 M992.7,498.3 L978.2,519.4 M977.3,506.0 L978.2,519.4 M977.3,506.0 L960.0,522.2 M959.1,508.8 L960.0,522.2 M959.1,508.8 L941.7,519.7 M940.8,506.3 L941.7,519.7 M940.8,506.3 L926.1,512.2 M925.2,498.8 L926.1,512.2 M925.2,498.8 L915.6,500.9 M914.7,487.5 L915.6,500.9 M914.7,487.5 L911.9,487.5 M911.0,474.1 L911.9,487.5 M911.0,474.1 L915.4,474.1 M914.5,460.7 L915.4,474.1 M914.5,460.7 L925.6,462.7 M924.7,449.3 L925.6,462.7 M924.7,449.3 L941.0,455.0 M940.1,441.6 L941.0,455.0 M940.1,441.6 L959.2,452.2 M958.3,438.8 L959.2,452.2 M958.3,438.8 L977.5,454.7 M976.6,441.3 L977.5,454.7 M976.6,441.3 L993.1,462.2 M992.2,448.8 L993.1,462.2 M992.2,448.8 L1003.5,473.5 M1002.6,460.1 L1003.5,473.5 M1002.6,460.1 L1007.3,486.8 M1006.4,473.4 L1007.3,486.8 M1006.4,473.4 L1003.8,500.3" stroke="#061a04" stroke-width="0.8" fill="none" opacity="0.6"/>
<path d="M1003.8,500.3 L1001.1,504.4 L997.7,508.2 L993.6,511.7 L989.0,514.7 L983.8,517.3 L978.2,519.4 L972.3,520.9 L966.2,521.8 L960.0,522.2 L953.8,521.9 L947.6,521.1 L941.7,519.7 L936.1,517.7 L930.9,515.2 L926.1,512.2 L922.0,508.8 L918.5,505.0 L915.6,500.9 L913.6,496.6 L912.3,492.1 L911.9,487.5 L912.2,483.0 L913.4,478.5 L915.4,474.1 L918.1,470.0 L921.5,466.2 L925.6,462.7 L930.2,459.7 L935.4,457.1 L941.0,455.0 L946.9,453.5 L953.0,452.6 L959.2,452.2 L965.4,452.5 L971.6,453.3 L977.5,454.7 L983.1,456.7 L988.3,459.2 L993.1,462.2 L997.2,465.6 L1000.7,469.4 L1003.5,473.5 L1005.6,477.8 L1006.9,482.3 L1007.3,486.8 L1007.0,491.4 L1005.8,495.9Z" stroke="#082006" stroke-width="1.1" fill="none"/>
</g>
<g clip-path="url(#hc4)"><path d="M861.6,279.4 L860.4,281.2 L858.9,282.9 L857.1,284.4 L855.1,285.8 L852.8,286.9 L850.3,287.8 L847.7,288.5 L845.0,288.9 L842.3,289.1 L839.5,289.0 L836.8,288.6 L834.2,288.0 L831.7,287.1 L829.4,286.0 L827.3,284.7 L825.5,283.2 L823.9,281.5 L822.7,279.8 L821.8,277.9 L821.2,275.9 L821.0,273.9 L821.2,271.9 L821.7,269.9 L822.6,268.0 L823.8,266.2 L825.3,264.5 L827.1,263.0 L829.1,261.6 L831.4,260.5 L833.9,259.6 L836.5,258.9 L839.2,258.5 L841.9,258.3 L844.7,258.4 L847.4,258.8 L850.0,259.4 L852.5,260.3 L854.8,261.4 L856.9,262.7 L858.7,264.2 L860.3,265.8 L861.5,267.6 L862.4,269.5 L863.0,271.5 L863.2,273.5 L863.0,275.5 L862.5,277.5ZM862.5,292.8 L861.3,294.6 L859.8,296.3 L858.0,297.8 L856.0,299.2 L853.7,300.3 L851.2,301.2 L848.6,301.9 L845.9,302.3 L843.2,302.5 L840.4,302.4 L837.7,302.0 L835.1,301.4 L832.6,300.5 L830.3,299.4 L828.2,298.1 L826.4,296.6 L824.8,294.9 L823.6,293.2 L822.7,291.3 L822.1,289.3 L821.9,287.3 L822.1,285.3 L822.6,283.3 L823.5,281.4 L824.7,279.6 L826.2,277.9 L828.0,276.4 L830.0,275.0 L832.3,273.9 L834.8,273.0 L837.4,272.3 L840.1,271.9 L842.8,271.7 L845.6,271.8 L848.3,272.2 L850.9,272.8 L853.4,273.7 L855.7,274.8 L857.8,276.1 L859.6,277.6 L861.2,279.2 L862.4,281.0 L863.3,282.9 L863.9,284.9 L864.1,286.9 L863.9,288.9 L863.4,290.9Z" fill-rule="evenodd" fill="url(#wall)"/>
<path d="M861.6,279.4 L862.5,292.8 M861.6,279.4 L854.1,300.1 M853.2,286.7 L854.1,300.1 M853.2,286.7 L841.5,302.4 M840.6,289.0 L841.5,302.4 M840.6,289.0 L829.4,298.9 M828.5,285.5 L829.4,298.9 M828.5,285.5 L822.6,290.9 M821.7,277.5 L822.6,290.9 M821.7,277.5 L823.5,281.4 M822.6,268.0 L823.5,281.4 M822.6,268.0 L831.9,274.1 M831.0,260.7 L831.9,274.1 M831.0,260.7 L844.5,271.8 M843.6,258.4 L844.5,271.8 M843.6,258.4 L856.6,275.3 M855.7,261.9 L856.6,275.3 M855.7,261.9 L863.4,283.3 M862.5,269.9 L863.4,283.3 M862.5,269.9 L862.5,292.8" stroke="#061a04" stroke-width="0.8" fill="none" opacity="0.6"/>
<path d="M862.5,292.8 L861.3,294.6 L859.8,296.3 L858.0,297.8 L856.0,299.2 L853.7,300.3 L851.2,301.2 L848.6,301.9 L845.9,302.3 L843.2,302.5 L840.4,302.4 L837.7,302.0 L835.1,301.4 L832.6,300.5 L830.3,299.4 L828.2,298.1 L826.4,296.6 L824.8,294.9 L823.6,293.2 L822.7,291.3 L822.1,289.3 L821.9,287.3 L822.1,285.3 L822.6,283.3 L823.5,281.4 L824.7,279.6 L826.2,277.9 L828.0,276.4 L830.0,275.0 L832.3,273.9 L834.8,273.0 L837.4,272.3 L840.1,271.9 L842.8,271.7 L845.6,271.8 L848.3,272.2 L850.9,272.8 L853.4,273.7 L855.7,274.8 L857.8,276.1 L859.6,277.6 L861.2,279.2 L862.4,281.0 L863.3,282.9 L863.9,284.9 L864.1,286.9 L863.9,288.9 L863.4,290.9Z" stroke="#082006" stroke-width="1.1" fill="none"/>
</g>
<g clip-path="url(#hc5)"><path d="M1143.4,362.1 L1142.2,363.9 L1140.7,365.6 L1138.9,367.2 L1136.9,368.5 L1134.6,369.7 L1132.1,370.6 L1129.5,371.3 L1126.8,371.7 L1124.1,371.8 L1121.3,371.7 L1118.6,371.4 L1116.0,370.8 L1113.5,369.9 L1111.2,368.8 L1109.1,367.5 L1107.3,366.0 L1105.7,364.3 L1104.5,362.5 L1103.6,360.6 L1103.0,358.6 L1102.8,356.6 L1103.0,354.6 L1103.5,352.6 L1104.4,350.7 L1105.6,348.9 L1107.1,347.2 L1108.9,345.6 L1110.9,344.3 L1113.2,343.1 L1115.7,342.2 L1118.3,341.5 L1121.0,341.1 L1123.7,341.0 L1126.5,341.1 L1129.2,341.4 L1131.8,342.0 L1134.3,342.9 L1136.6,344.0 L1138.7,345.3 L1140.5,346.8 L1142.1,348.5 L1143.3,350.3 L1144.2,352.2 L1144.8,354.2 L1145.0,356.2 L1144.8,358.2 L1144.3,360.2ZM1144.3,375.5 L1143.1,377.3 L1141.6,379.0 L1139.8,380.6 L1137.8,381.9 L1135.5,383.1 L1133.0,384.0 L1130.4,384.7 L1127.7,385.1 L1125.0,385.2 L1122.2,385.1 L1119.5,384.8 L1116.9,384.2 L1114.4,383.3 L1112.1,382.2 L1110.0,380.9 L1108.2,379.4 L1106.6,377.7 L1105.4,375.9 L1104.5,374.0 L1103.9,372.0 L1103.7,370.0 L1103.9,368.0 L1104.4,366.0 L1105.3,364.1 L1106.5,362.3 L1108.0,360.6 L1109.8,359.0 L1111.8,357.7 L1114.1,356.5 L1116.6,355.6 L1119.2,354.9 L1121.9,354.5 L1124.6,354.4 L1127.4,354.5 L1130.1,354.8 L1132.7,355.4 L1135.2,356.3 L1137.5,357.4 L1139.6,358.7 L1141.4,360.2 L1143.0,361.9 L1144.2,363.7 L1145.1,365.6 L1145.7,367.6 L1145.9,369.6 L1145.7,371.6 L1145.2,373.6Z" fill-rule="evenodd" fill="url(#wall)"/>
<path d="M1143.4,362.1 L1144.3,375.5 M1143.4,362.1 L1136.0,382.9 M1135.1,369.5 L1136.0,382.9 M1135.1,369.5 L1123.3,385.2 M1122.4,371.8 L1123.3,385.2 M1122.4,371.8 L1111.3,381.7 M1110.4,368.3 L1111.3,381.7 M1110.4,368.3 L1104.4,373.6 M1103.5,360.2 L1104.4,373.6 M1103.5,360.2 L1105.3,364.1 M1104.4,350.7 L1105.3,364.1 M1104.4,350.7 L1113.6,356.8 M1112.7,343.4 L1113.6,356.8 M1112.7,343.4 L1126.3,354.4 M1125.4,341.0 L1126.3,354.4 M1125.4,341.0 L1138.3,357.9 M1137.4,344.5 L1138.3,357.9 M1137.4,344.5 L1145.2,366.0 M1144.3,352.6 L1145.2,366.0 M1144.3,352.6 L1144.3,375.5" stroke="#061a04" stroke-width="0.8" fill="none" opacity="0.6"/>
<path d="M1144.3,375.5 L1143.1,377.3 L1141.6,379.0 L1139.8,380.6 L1137.8,381.9 L1135.5,383.1 L1133.0,384.0 L1130.4,384.7 L1127.7,385.1 L1125.0,385.2 L1122.2,385.1 L1119.5,384.8 L1116.9,384.2 L1114.4,383.3 L1112.1,382.2 L1110.0,380.9 L1108.2,379.4 L1106.6,377.7 L1105.4,375.9 L1104.5,374.0 L1103.9,372.0 L1103.7,370.0 L1103.9,368.0 L1104.4,366.0 L1105.3,364.1 L1106.5,362.3 L1108.0,360.6 L1109.8,359.0 L1111.8,357.7 L1114.1,356.5 L1116.6,355.6 L1119.2,354.9 L1121.9,354.5 L1124.6,354.4 L1127.4,354.5 L1130.1,354.8 L1132.7,355.4 L1135.2,356.3 L1137.5,357.4 L1139.6,358.7 L1141.4,360.2 L1143.0,361.9 L1144.2,363.7 L1145.1,365.6 L1145.7,367.6 L1145.9,369.6 L1145.7,371.6 L1145.2,373.6Z" stroke="#082006" stroke-width="1.1" fill="none"/>
</g>
<g clip-path="url(#hc6)"><path d="M747.7,485.3 L746.5,487.1 L745.0,488.8 L743.2,490.3 L741.2,491.6 L738.9,492.8 L736.4,493.7 L733.8,494.3 L731.1,494.8 L728.4,494.9 L725.6,494.8 L722.9,494.4 L720.3,493.8 L717.8,492.9 L715.5,491.8 L713.4,490.5 L711.6,489.0 L710.0,487.3 L708.8,485.5 L707.9,483.6 L707.3,481.6 L707.1,479.6 L707.3,477.6 L707.8,475.6 L708.7,473.7 L709.9,471.9 L711.4,470.2 L713.2,468.7 L715.2,467.4 L717.5,466.2 L720.0,465.3 L722.6,464.7 L725.3,464.3 L728.0,464.1 L730.8,464.2 L733.5,464.6 L736.1,465.2 L738.6,466.1 L740.9,467.2 L743.0,468.5 L744.8,470.0 L746.4,471.7 L747.6,473.5 L748.5,475.4 L749.1,477.4 L749.3,479.4 L749.1,481.4 L748.6,483.4ZM748.6,498.7 L747.4,500.5 L745.9,502.2 L744.1,503.7 L742.1,505.0 L739.8,506.2 L737.3,507.1 L734.7,507.7 L732.0,508.2 L729.3,508.3 L726.5,508.2 L723.8,507.8 L721.2,507.2 L718.7,506.3 L716.4,505.2 L714.3,503.9 L712.5,502.4 L710.9,500.7 L709.7,498.9 L708.8,497.0 L708.2,495.0 L708.0,493.0 L708.2,491.0 L708.7,489.0 L709.6,487.1 L710.8,485.3 L712.3,483.6 L714.1,482.1 L716.1,480.8 L718.4,479.6 L720.9,478.7 L723.5,478.1 L726.2,477.7 L728.9,477.5 L731.7,477.6 L734.4,478.0 L737.0,478.6 L739.5,479.5 L741.8,480.6 L743.9,481.9 L745.7,483.4 L747.3,485.1 L748.5,486.9 L749.4,488.8 L750.0,490.8 L750.2,492.8 L750.0,494.8 L749.5,496.8Z" fill-rule="evenodd" fill="url(#wall)"/>
<path d="M747.7,485.3 L748.6,498.7 M747.7,485.3 L740.3,506.0 M739.4,492.6 L740.3,506.0 M739.4,492.6 L727.6,508.3 M726.7,494.9 L727.6,508.3 M726.7,494.9 L715.5,504.7 M714.6,491.3 L715.5,504.7 M714.6,491.3 L708.6,496.6 M707.7,483.2 L708.6,496.6 M707.7,483.2 L709.6,487.1 M708.7,473.7 L709.6,487.1 M708.7,473.7 L717.9,479.8 M717.0,466.4 L717.9,479.8 M717.0,466.4 L730.6,477.5 M729.7,464.1 L730.6,477.5 M729.7,464.1 L742.7,481.1 M741.8,467.7 L742.7,481.1 M741.8,467.7 L749.6,489.2 M748.7,475.8 L749.6,489.2 M748.7,475.8 L748.6,498.7" stroke="#061a04" stroke-width="0.8" fill="none" opacity="0.6"/>
<path d="M748.6,498.7 L747.4,500.5 L745.9,502.2 L744.1,503.7 L742.1,505.0 L739.8,506.2 L737.3,507.1 L734.7,507.7 L732.0,508.2 L729.3,508.3 L726.5,508.2 L723.8,507.8 L721.2,507.2 L718.7,506.3 L716.4,505.2 L714.3,503.9 L712.5,502.4 L710.9,500.7 L709.7,498.9 L708.8,497.0 L708.2,495.0 L708.0,493.0 L708.2,491.0 L708.7,489.0 L709.6,487.1 L710.8,485.3 L712.3,483.6 L714.1,482.1 L716.1,480.8 L718.4,479.6 L720.9,478.7 L723.5,478.1 L726.2,477.7 L728.9,477.5 L731.7,477.6 L734.4,478.0 L737.0,478.6 L739.5,479.5 L741.8,480.6 L743.9,481.9 L745.7,483.4 L747.3,485.1 L748.5,486.9 L749.4,488.8 L750.0,490.8 L750.2,492.8 L750.0,494.8 L749.5,496.8Z" stroke="#082006" stroke-width="1.1" fill="none"/>
</g>
<g clip-path="url(#hc7)"><path d="M1029.9,568.4 L1028.7,570.2 L1027.2,571.9 L1025.4,573.4 L1023.4,574.8 L1021.1,575.9 L1018.6,576.8 L1016.0,577.5 L1013.3,577.9 L1010.6,578.1 L1007.8,578.0 L1005.1,577.6 L1002.5,577.0 L1000.0,576.1 L997.7,575.0 L995.6,573.6 L993.8,572.1 L992.2,570.5 L991.0,568.7 L990.1,566.7 L989.5,564.8 L989.3,562.7 L989.5,560.7 L990.0,558.7 L990.9,556.8 L992.1,555.0 L993.6,553.3 L995.4,551.8 L997.4,550.4 L999.7,549.3 L1002.2,548.4 L1004.8,547.7 L1007.5,547.3 L1010.2,547.1 L1013.0,547.2 L1015.7,547.6 L1018.3,548.2 L1020.8,549.1 L1023.1,550.2 L1025.2,551.6 L1027.0,553.1 L1028.6,554.7 L1029.8,556.5 L1030.7,558.5 L1031.3,560.4 L1031.5,562.5 L1031.3,564.5 L1030.8,566.5ZM1030.8,581.8 L1029.6,583.6 L1028.1,585.3 L1026.3,586.8 L1024.3,588.2 L1022.0,589.3 L1019.5,590.2 L1016.9,590.9 L1014.2,591.3 L1011.5,591.5 L1008.7,591.4 L1006.0,591.0 L1003.4,590.4 L1000.9,589.5 L998.6,588.4 L996.5,587.0 L994.7,585.5 L993.1,583.9 L991.9,582.1 L991.0,580.1 L990.4,578.2 L990.2,576.1 L990.4,574.1 L990.9,572.1 L991.8,570.2 L993.0,568.4 L994.5,566.7 L996.3,565.2 L998.3,563.8 L1000.6,562.7 L1003.1,561.8 L1005.7,561.1 L1008.4,560.7 L1011.1,560.5 L1013.9,560.6 L1016.6,561.0 L1019.2,561.6 L1021.7,562.5 L1024.0,563.6 L1026.1,565.0 L1027.9,566.5 L1029.5,568.1 L1030.7,569.9 L1031.6,571.9 L1032.2,573.8 L1032.4,575.9 L1032.2,577.9 L1031.7,579.9Z" fill-rule="evenodd" fill="url(#wall)"/>
<path d="M1029.9,568.4 L1030.8,581.8 M1029.9,568.4 L1022.5,589.1 M1021.6,575.7 L1022.5,589.1 M1021.6,575.7 L1009.8,591.4 M1008.9,578.0 L1009.8,591.4 M1008.9,578.0 L997.7,587.9 M996.8,574.5 L997.7,587.9 M996.8,574.5 L990.8,579.8 M989.9,566.4 L990.8,579.8 M989.9,566.4 L991.8,570.2 M990.9,556.8 L991.8,570.2 M990.9,556.8 L1000.1,562.9 M999.2,549.5 L1000.1,562.9 M999.2,549.5 L1012.8,560.6 M1011.9,547.2 L1012.8,560.6 M1011.9,547.2 L1024.9,564.1 M1024.0,550.7 L1024.9,564.1 M1024.0,550.7 L1031.8,572.2 M1030.9,558.8 L1031.8,572.2 M1030.9,558.8 L1030.8,581.8" stroke="#061a04" stroke-width="0.8" fill="none" opacity="0.6"/>
<path d="M1030.8,581.8 L1029.6,583.6 L1028.1,585.3 L1026.3,586.8 L1024.3,588.2 L1022.0,589.3 L1019.5,590.2 L1016.9,590.9 L1014.2,591.3 L1011.5,591.5 L1008.7,591.4 L1006.0,591.0 L1003.4,590.4 L1000.9,589.5 L998.6,588.4 L996.5,587.0 L994.7,585.5 L993.1,583.9 L991.9,582.1 L991.0,580.1 L990.4,578.2 L990.2,576.1 L990.4,574.1 L990.9,572.1 L991.8,570.2 L993.0,568.4 L994.5,566.7 L996.3,565.2 L998.3,563.8 L1000.6,562.7 L1003.1,561.8 L1005.7,561.1 L1008.4,560.7 L1011.1,560.5 L1013.9,560.6 L1016.6,561.0 L1019.2,561.6 L1021.7,562.5 L1024.0,563.6 L1026.1,565.0 L1027.9,566.5 L1029.5,568.1 L1030.7,569.9 L1031.6,571.9 L1032.2,573.8 L1032.4,575.9 L1032.2,577.9 L1031.7,579.9Z" stroke="#082006" stroke-width="1.1" fill="none"/>
</g>
<g clip-path="url(#topclip)"><path d="M835.1,531.4 L848.4,499.3 M931.6,416.8 L934.6,414.2 M760.0,523.8 L714.1,510.1 M928.1,387.2 L912.7,394.9 M950.9,439.3 L941.6,424.0 M843.4,476.6 L825.9,472.0 M862.9,242.0 L843.3,255.2 M686.8,463.0 L692.5,489.0 M994.8,573.0 L989.5,564.3 M924.4,418.2 L922.3,418.9 M917.3,413.9 L912.8,410.2 M1025.2,587.8 L1028.7,570.2 M928.6,420.3 L929.3,422.5 M925.6,417.5 L925.8,418.6 M825.9,472.0 L812.2,462.7 M853.2,286.7 L840.6,289.0 M922.8,411.1 L929.4,411.2 M922.8,411.1 L921.1,406.3 M1113.2,369.8 L1112.6,395.0 M1070.3,357.4 L1082.0,395.3 M846.4,363.2 L849.9,349.8 M882.6,545.5 L910.7,536.0 M910.7,536.0 L939.9,529.8 M849.9,349.8 L860.1,338.4 M839.4,408.2 L858.0,407.6 M750.5,388.2 L765.4,411.9 M897.8,564.7 L930.1,559.6 M1015.1,429.1 L1032.1,454.9 M924.6,419.3 L924.4,418.2 M1004.8,331.9 L969.4,337.9 M929.4,418.3 L931.6,416.8 M809.9,424.0 L765.4,411.9 M1112.6,332.5 L1121.9,341.0 M909.9,423.8 L908.6,416.7 M787.5,517.2 L784.6,496.8 M989.6,592.0 L1025.2,587.8 M846.4,363.2 L818.2,389.9 M1015.1,429.1 L996.5,430.1 M889.2,421.4 L908.6,416.7 M1103.3,353.2 L1109.9,344.9 M927.1,417.9 L929.4,418.3 M928.6,414.5 L929.4,411.2 M996.5,430.1 L978.9,425.7 M1072.6,538.1 L1054.1,571.8 M990.5,361.7 L969.4,337.9 M922.3,418.9 L923.1,417.0 M926.0,419.8 L928.6,420.3 M933.5,444.2 L950.9,439.3 M1050.1,399.8 L1086.5,418.0 M1082.9,482.9 L1037.4,480.0 M941.6,424.0 L935.0,429.4 M742.3,468.1 L774.6,463.3 M930.1,559.6 L958.7,553.5 M840.6,289.0 L856.0,308.7 M891.5,460.2 L912.2,465.9 M714.1,490.9 L707.6,482.7 M930.1,559.6 L939.9,529.8 M956.9,316.5 L988.0,312.4 M989.6,592.0 L977.7,573.7 M784.6,496.8 L774.6,463.3 M917.3,413.9 L908.6,416.7 M989.5,564.3 L958.7,553.5 M1039.7,503.9 L1037.4,480.0 M1014.7,547.4 L1008.5,525.7 M919.5,418.9 L920.7,415.9 M748.8,476.3 L784.6,496.8 M1005.8,468.0 L1032.1,454.9 M989.6,592.0 L994.5,569.8 M976.6,533.2 L958.7,553.5 M893.8,327.9 L913.5,306.7 M686.8,463.0 L705.4,429.5 M928.8,426.1 L935.0,429.4 M918.2,492.3 L884.8,492.6 M925.6,417.5 L925.5,416.0 M983.9,503.5 L976.6,533.2 M1112.6,332.5 L1109.9,344.9 M1140.5,378.1 L1125.9,371.8 M922.6,277.1 L970.1,291.0 M919.9,453.5 L933.5,444.2 M927.1,417.9 L928.1,416.6 M761.2,329.1 L797.5,341.5 M1091.2,504.3 L1082.9,482.9 M978.9,425.7 L986.5,445.3 M943.1,416.9 L941.6,424.0 M1102.1,448.0 L1066.3,438.9 M1140.5,378.1 L1112.6,395.0 M726.0,494.8 L714.1,490.9 M934.6,414.2 L943.1,416.9 M1128.3,436.8 L1121.3,413.1 M897.8,564.7 L851.9,551.1 M1054.1,571.8 L1028.4,567.0 M973.8,367.8 L990.5,361.7 M894.4,397.7 L912.8,410.2 M928.1,416.6 L928.6,414.5 M925.1,423.2 L921.2,421.8 M1159.8,343.2 L1144.5,359.6 M936.5,418.8 L941.6,424.0 M990.5,361.7 L1009.1,360.7 M941.8,362.4 L973.8,367.8 M750.5,388.2 L769.8,353.5 M1005.2,481.7 L997.5,494.1 M989.6,592.0 L943.7,578.3 M1138.1,322.1 L1112.3,329.3 M921.2,421.8 L919.5,418.9 M956.7,404.6 L939.1,410.4 M893.8,327.9 L912.0,330.4 M997.5,494.1 L983.9,503.5 M839.4,408.2 L818.2,389.9 M712.0,457.5 L731.3,422.9 M938.1,349.1 L969.4,337.9 M1046.4,295.4 L1017.3,301.6 M912.0,330.4 L927.6,337.9 M954.6,268.7 L969.8,287.8 M1039.7,503.9 L1008.5,525.7 M897.1,433.8 L897.9,447.4 M1005.2,481.7 L1037.4,480.0 M1026.0,552.2 L1031.3,560.9 M897.8,564.7 L910.4,532.8 M1128.3,436.8 L1102.1,448.0 M1082.9,482.9 L1061.7,466.8 M897.9,447.4 L891.5,460.2 M989.6,592.0 L1005.8,574.6 M730.4,464.2 L768.5,436.4 M831.0,260.7 L843.6,258.4 M927.3,419.1 L929.4,418.3 M812.2,462.7 L816.9,493.8 M928.8,426.1 L922.2,426.0 M835.1,531.4 L878.5,514.2 M928.8,426.1 L925.6,431.4 M1138.1,322.1 L1159.8,343.2 M1017.6,304.8 L988.0,312.4 M912.7,394.9 L894.4,397.7 M1032.1,454.9 L1037.4,480.0 M843.6,258.4 L855.7,261.9 M1048.9,386.2 L1040.7,374.0 M989.5,564.3 L992.1,555.0 M925.6,417.5 L923.1,417.0 M804.3,450.4 L768.5,436.4 M779.8,295.6 L788.7,315.6 M894.4,397.7 L876.2,395.2 M797.8,344.7 L795.9,370.4 M808.3,284.1 L828.5,285.5 M812.2,462.7 L804.3,450.4 M875.5,330.7 L856.0,308.7 M875.1,263.3 L861.6,279.4 M992.1,555.0 L1001.7,548.5 M860.6,387.7 L858.0,407.6 M978.9,425.7 L969.5,439.7 M923.6,420.6 L921.2,421.8 M1046.4,295.4 L1064.8,315.5 M804.3,450.4 L803.5,436.8 M934.6,414.2 L936.5,418.8 M1103.3,353.2 L1070.3,357.4 M934.6,414.2 L939.1,410.4 M1082.9,482.9 L1039.7,503.9 M1144.5,359.6 L1137.9,367.9 M894.4,397.7 L908.6,416.7 M918.2,492.3 L878.5,514.2 M1159.8,343.2 L1143.2,350.1 M925.1,423.2 L922.2,426.0 M1048.9,386.2 L1050.1,399.8 M941.8,362.4 L961.5,378.0 M931.9,419.9 L934.3,423.4 M1040.7,374.0 L1070.3,357.4 M925.6,417.5 L927.1,417.9 M875.5,330.7 L886.2,296.3 M933.5,444.2 L935.0,429.4 M956.7,404.6 L931.0,406.4 M779.8,295.6 L808.0,280.9 M970.1,291.0 L956.9,316.5 M765.4,411.9 L768.5,436.4 M1128.3,436.8 L1109.8,470.6 M1044.1,412.8 L1066.3,438.9 M1184.0,335.5 L1159.8,343.2 M1086.5,418.0 L1112.6,395.0 M929.4,411.2 L931.0,406.4 M947.9,507.9 L966.5,508.3 M882.6,545.5 L835.1,531.4 M812.2,462.7 L774.6,463.3 M927.6,337.9 L956.9,316.5 M964.9,416.8 L941.6,424.0 M929.3,422.5 L934.3,423.4 M731.3,422.9 L730.4,464.2 M692.5,489.0 L714.1,490.9 M897.9,447.4 L916.2,429.3 M860.1,338.4 L826.0,323.0 M943.7,578.3 L958.4,550.3 M875.1,263.3 L862.6,269.9 M1143.2,350.1 L1144.5,359.6 M1046.4,295.4 L1092.2,308.8 M860.6,387.7 L839.4,408.2 M1102.1,448.0 L1086.5,418.0 M740.0,503.1 L738.8,492.8 M1112.6,395.0 L1082.0,395.3 M919.9,453.5 L925.6,431.4 M878.9,470.2 L884.8,492.6 M1063.7,517.9 L1044.4,552.8 M1184.0,335.5 L1138.1,322.1 M1086.5,418.0 L1066.3,438.9 M862.0,476.0 L848.4,499.3 M947.9,507.9 L930.9,502.3 M712.0,457.5 L708.9,473.2 M1032.1,454.9 L1061.7,466.8 M924.6,419.3 L925.8,418.6 M827.6,249.4 L843.6,258.4 M930.9,502.3 L918.2,492.3 M931.9,419.9 L936.5,418.8 M779.8,295.6 L798.4,262.1 M933.5,444.2 L925.6,431.4 M912.8,410.2 L921.1,406.3 M908.8,255.3 L874.8,260.1 M828.5,285.5 L826.0,323.0 M817.0,228.6 L827.3,246.2 M978.9,425.7 L964.9,416.8 M1121.3,413.1 L1112.6,395.0 M1121.9,341.0 L1134.6,343.0 M926.2,421.2 L925.1,423.2 M947.9,507.9 L939.9,529.8 M1005.2,481.7 L1039.7,503.9 M964.9,416.8 L956.7,404.6 M950.9,439.3 L969.5,439.7 M1184.0,335.5 L1165.4,369.3 M925.5,416.0 L928.1,416.6 M969.5,439.7 L986.5,445.3 M861.6,279.4 L886.2,296.3 M860.6,387.7 L818.2,389.9 M724.0,396.0 L731.0,419.7 M826.0,323.0 L856.0,308.7 M924.4,418.2 L925.6,417.5 M686.8,463.0 L711.7,454.3 M1009.1,360.7 L1026.7,365.1 M964.9,416.8 L943.1,416.9 M929.3,422.5 L931.9,419.9 M708.9,473.2 L717.6,466.2 M908.8,255.3 L922.3,273.9 M908.6,416.7 L912.8,410.2 M1026.7,365.1 L1040.7,374.0 M875.1,263.3 L855.7,261.9 M714.1,510.1 L740.0,503.1 M769.8,353.5 L795.9,370.4 M920.7,415.9 L924.3,414.1 M765.4,411.9 L787.2,391.9 M1143.2,350.1 L1134.6,343.0 M798.4,262.1 L827.3,246.2 M1109.9,344.9 L1121.9,341.0 M920.7,415.9 L922.8,411.1 M913.5,306.7 L956.9,316.5 M928.1,387.2 L921.1,406.3 M740.0,503.1 L747.5,485.8 M996.5,430.1 L999.2,455.2 M805.9,537.4 L835.1,531.4 M938.1,349.1 L941.8,362.4 M897.8,564.7 L882.6,545.5 M923.1,417.0 L925.5,416.0 M750.5,388.2 L787.2,391.9 M798.4,262.1 L822.3,264.8 M1026.7,365.1 L1043.2,344.7 M1028.7,570.2 L1019.1,576.7 M922.6,277.1 L913.5,306.7 M928.1,387.2 L955.5,391.0 M724.0,396.0 L750.2,385.0 M878.9,470.2 L862.0,476.0 M827.6,249.4 L831.0,260.7 M809.9,424.0 L787.2,391.9 M817.0,228.6 L862.9,242.0 M928.6,420.3 L929.4,418.3 M917.0,423.1 L915.1,418.4 M928.6,420.3 L931.9,419.9 M1065.1,318.7 L1043.2,344.7 M1061.7,466.8 L1066.3,438.9 M707.6,482.7 L708.9,473.2 M714.1,510.1 L692.5,489.0 M917.0,423.1 L909.9,423.8 M817.0,228.6 L798.4,262.1 M922.8,411.1 L912.8,410.2 M926.2,421.2 L929.3,422.5 M927.1,417.9 L925.8,418.6 M818.2,389.9 L787.2,391.9 M1044.1,412.8 L1086.5,418.0 M1000.5,282.1 L987.7,309.2 M983.9,503.5 L966.5,508.3 M714.1,510.1 L713.8,487.7 M934.3,423.4 L935.0,429.4 M748.8,476.3 L774.6,463.3 M976.6,533.2 L939.9,529.8 M805.9,537.4 L787.5,517.2 M808.3,284.1 L826.0,323.0 M875.1,263.3 L886.2,296.3 M1001.7,548.5 L1008.5,525.7 M1063.7,517.9 L1026.0,552.2 M908.8,255.3 L954.6,268.7 M889.2,421.4 L909.9,423.8 M846.4,363.2 L795.9,370.4 M795.9,370.4 L787.2,391.9 M878.5,514.2 L848.4,499.3 M927.6,337.9 L938.1,349.1 M769.8,353.5 L797.8,344.7 M1113.2,369.8 L1082.0,395.3 M913.5,306.7 L886.2,296.3 M992.1,555.0 L976.6,533.2 M922.3,418.9 L920.7,415.9 M996.5,430.1 L986.5,445.3 M774.6,463.3 L768.5,436.4 M1109.8,470.6 L1061.4,463.6 M798.4,262.1 L821.3,274.3 M923.1,417.0 L924.3,414.1 M724.0,396.0 L742.6,362.5 M911.6,479.6 L884.8,492.6 M1026.0,552.2 L1008.5,525.7 M1017.6,304.8 L1004.8,331.9 M966.5,508.3 L976.6,533.2 M891.5,460.2 L911.6,479.6 M876.2,395.2 L860.6,387.7 M862.6,269.9 L861.6,279.4 M1017.6,304.8 L1065.1,318.7 M894.4,397.7 L889.2,421.4 M1054.1,571.8 L1044.4,552.8 M1091.2,504.3 L1063.7,517.9 M1044.4,552.8 L1031.3,560.9 M731.3,422.9 L768.5,436.4 M919.5,418.9 L915.1,418.4 M805.9,537.4 L760.0,523.8 M843.4,476.6 L816.9,493.8 M1009.1,360.7 L1004.8,331.9 M992.1,555.0 L958.7,553.5 M1031.3,560.9 L1028.7,570.2 M714.1,510.1 L725.7,491.6 M1005.8,468.0 L1037.4,480.0 M1125.9,371.8 L1113.2,369.8 M891.5,460.2 L878.9,470.2 M789.0,318.8 L808.3,284.1 M835.1,531.4 L816.9,493.8 M922.2,426.0 L917.0,423.1 M930.1,559.6 L910.7,536.0 M912.0,330.4 L913.5,306.7 M922.2,426.0 L916.2,429.3 M1054.1,571.8 L1025.2,587.8 M1140.5,378.1 L1137.9,367.9 M846.4,363.2 L797.8,344.7 M928.6,420.3 L926.2,421.2 M855.7,261.9 L862.6,269.9 M1025.2,587.8 L1006.1,577.8 M955.5,391.0 L931.0,406.4 M911.6,479.6 L912.2,465.9 M931.0,406.4 L939.1,410.4 M943.7,578.3 L977.7,573.7 M990.5,361.7 L1004.8,331.9 M1001.7,548.5 L1014.7,547.4 M1035.5,605.6 L1025.2,587.8 M686.8,463.0 L708.6,470.0 M747.5,485.8 L738.8,492.8 M922.3,418.9 L919.5,418.9 M1054.1,571.8 L1031.0,557.7 M803.5,436.8 L809.9,424.0 M969.4,337.9 L956.9,316.5 M668.2,496.5 L692.5,489.0 M740.0,503.1 L784.6,496.8 M936.5,418.8 L934.3,423.4 M955.5,391.0 L961.5,378.0 M936.5,418.8 L943.1,416.9 M1159.8,343.2 L1134.6,343.0 M927.3,419.1 L925.8,418.6 M1137.9,367.9 L1125.9,371.8 M999.2,455.2 L1005.8,468.0 M921.2,421.8 L917.0,423.1 M1050.1,399.8 L1044.1,412.8 M1091.2,504.3 L1072.6,538.1 M894.4,397.7 L875.5,412.2 M730.4,464.2 L742.3,468.1 M918.2,492.3 L911.6,479.6 M731.3,422.9 L765.4,411.9 M1035.5,605.6 L1054.1,571.8 M1128.3,436.8 L1086.2,414.8 M943.7,578.3 L930.1,559.6 M921.1,406.3 L931.0,406.4 M1026.0,552.2 L1014.7,547.4 M941.8,362.4 L969.4,337.9 M926.0,419.8 L923.6,420.6 M1048.9,386.2 L1082.0,395.3 M668.2,496.5 L714.1,510.1 M897.9,447.4 L919.9,453.5 M928.8,426.1 L934.3,423.4 M924.6,419.3 L922.3,418.9 M742.3,468.1 L768.5,436.4 M886.2,296.3 L856.0,308.7 M893.8,327.9 L886.2,296.3 M1146.9,403.0 L1140.5,378.1 M950.9,439.3 L935.0,429.4 M922.2,426.0 L925.6,431.4 M797.8,344.7 L826.0,323.0 M1125.9,371.8 L1112.6,395.0 M803.5,436.8 L768.5,436.4 M1035.5,605.6 L989.6,592.0 M923.6,420.6 L925.1,423.2 M958.7,553.5 L939.9,529.8 M964.9,416.8 L969.5,439.7 M668.2,496.5 L686.8,463.0 M922.3,418.9 L921.2,421.8 M977.7,573.7 L958.7,553.5 M724.0,396.0 L765.1,408.7 M1000.5,282.1 L969.8,287.8 M976.6,533.2 L1008.5,525.7 M1109.9,344.9 L1070.3,357.4 M925.1,423.2 L928.8,426.1 M875.1,263.3 L922.6,277.1 M840.6,289.0 L826.0,323.0 M1109.8,470.6 L1102.1,448.0 M1146.9,403.0 L1121.3,413.1 M921.2,421.8 L922.2,426.0 M943.7,578.3 L897.8,564.7 M973.8,367.8 L969.4,337.9 M1063.7,517.9 L1008.5,525.7 M761.2,329.1 L769.5,350.3 M912.7,394.9 L921.1,406.3 M1048.9,386.2 L1070.3,357.4 M843.4,476.6 L848.4,499.3 M956.7,404.6 L955.5,391.0 M926.0,419.8 L926.2,421.2 M997.5,494.1 L1008.5,525.7 M1006.1,577.8 L994.8,573.0 M1092.2,308.8 L1064.8,315.5 M928.1,416.6 L929.4,418.3 M1000.5,282.1 L1017.3,301.6 M853.2,286.7 L856.0,308.7 M1031.8,423.1 L1066.3,438.9 M897.9,447.4 L912.2,465.9 M1065.1,318.7 L1109.9,344.9 M986.5,445.3 L999.2,455.2 M1109.8,470.6 L1082.9,482.9 M804.3,450.4 L774.6,463.3 M983.9,503.5 L1008.5,525.7 M917.3,413.9 L922.8,411.1 M717.6,466.2 L730.4,464.2 M784.6,496.8 L816.9,493.8 M850.1,376.5 L818.2,389.9 M970.1,291.0 L988.0,312.4 M1138.1,322.1 L1134.3,339.8 M999.2,455.2 L1032.1,454.9 M798.4,262.1 L808.0,280.9 M924.3,414.1 L928.6,414.5 M761.2,329.1 L788.7,315.6 M924.3,414.1 L929.4,411.2 M964.9,416.8 L950.9,439.3 M926.0,419.8 L924.6,419.3 M760.0,523.8 L784.3,493.6 M1086.5,418.0 L1082.0,395.3 M828.5,285.5 L821.6,277.5 M853.2,286.7 L886.2,296.3 M927.3,419.1 L928.6,420.3 M1092.2,308.8 L1112.3,329.3 M862.0,476.0 L884.8,492.6 M941.8,362.4 L938.3,375.8 M1146.9,403.0 L1128.3,436.8 M1032.1,454.9 L1066.3,438.9 M916.2,429.3 L909.9,423.8 M1165.4,369.3 L1159.8,343.2 M1019.1,576.7 L1006.1,577.8 M1104.6,362.6 L1103.3,353.2 M925.6,417.5 L928.1,416.6 M924.4,418.2 L925.8,418.6 M862.0,476.0 L843.4,476.6 M860.1,338.4 L856.0,308.7 M915.1,418.4 L917.3,413.9 M1063.7,517.9 L1039.7,503.9 M915.1,418.4 L908.6,416.7 M1165.4,369.3 L1137.6,364.7 M923.6,420.6 L922.3,418.9 M1102.1,448.0 L1061.7,466.8 M861.6,279.4 L853.2,286.7 M1104.6,362.6 L1082.0,395.3 M912.7,394.9 L912.8,410.2 M1043.2,344.7 L1070.3,357.4 M930.9,502.3 L939.9,529.8 M925.5,416.0 L928.6,414.5 M882.6,545.5 L878.5,514.2 M1000.5,282.1 L1046.4,295.4 M850.1,376.5 L846.4,363.2 M997.5,494.1 L1039.7,503.9 M1031.8,423.1 L1032.1,454.9 M927.3,419.1 L926.0,419.8 M928.1,416.6 L931.6,416.8 M1109.8,470.6 L1091.2,504.3 M1165.4,369.3 L1140.5,378.1 M878.9,470.2 L911.6,479.6 M925.6,431.4 L916.2,429.3 M925.6,431.4 L935.0,429.4 M835.1,531.4 L787.5,517.2 M956.7,404.6 L943.1,416.9 M920.7,415.9 L917.3,413.9 M761.2,329.1 L779.8,295.6 M1138.1,322.1 L1121.6,337.8 M862.9,242.0 L827.3,246.2 M924.3,414.1 L922.8,411.1 M1092.2,308.8 L1138.1,322.1 M828.5,285.5 L840.6,289.0 M927.3,419.1 L927.1,417.9 M747.5,485.8 L784.6,496.8 M897.1,433.8 L909.9,423.8 M827.6,249.4 L822.6,268.0 M1040.7,374.0 L1043.2,344.7 M917.0,423.1 L916.2,429.3 M876.2,395.2 L858.0,407.6 M860.6,387.7 L850.1,376.5 M822.5,414.0 L787.2,391.9 M808.3,284.1 L821.6,277.5 M705.4,429.5 L711.7,454.3 M915.1,418.4 L909.9,423.8 M977.7,573.7 L989.5,564.3 M1165.4,369.3 L1144.2,356.4 M1104.6,362.6 L1070.3,357.4 M809.9,424.0 L822.5,414.0 M954.6,268.7 L922.3,273.9 M862.9,242.0 L874.8,260.1 M1043.2,344.7 L1004.8,331.9 M934.3,423.4 L941.6,424.0 M925.5,416.0 L924.3,414.1 M822.5,414.0 L839.4,408.2 M712.0,457.5 L730.4,464.2 M1165.4,369.3 L1146.9,403.0 M848.4,499.3 L884.8,492.6 M1044.1,412.8 L1031.8,423.1 M927.6,337.9 L969.4,337.9 M1113.2,369.8 L1104.6,362.6 M851.9,551.1 L882.6,545.5 M966.5,508.3 L939.9,529.8 M1121.3,413.1 L1086.5,418.0 M1031.8,423.1 L1015.1,429.1 M970.1,291.0 L913.5,306.7 M1065.1,318.7 L1070.3,357.4 M742.6,362.5 L750.2,385.0 M878.5,514.2 L884.8,492.6 M926.2,421.2 L923.6,420.6 M705.4,429.5 L731.0,419.7 M920.7,415.9 L915.1,418.4 M912.2,465.9 L919.9,453.5 M875.5,330.7 L860.1,338.4 M939.1,410.4 L943.1,416.9 M930.9,502.3 L910.7,536.0 M750.5,388.2 L795.9,370.4 M1001.7,548.5 L976.6,533.2 M738.8,492.8 L726.0,494.8 M923.1,417.0 L920.7,415.9 M929.4,411.2 L939.1,410.4 M1146.9,403.0 L1112.3,391.8 M961.5,378.0 L973.8,367.8 M897.1,433.8 L916.2,429.3 M760.0,523.8 L787.5,517.2 M922.6,277.1 L886.2,296.3 M929.3,422.5 L925.1,423.2 M851.9,551.1 L835.1,531.4 M1005.8,468.0 L1005.2,481.7 M1061.7,466.8 L1037.4,480.0 M822.5,414.0 L818.2,389.9 M692.5,489.0 L707.6,482.7 M742.6,362.5 L769.5,350.3 M1044.4,552.8 L1026.0,552.2 M875.5,330.7 L893.8,327.9 M862.9,242.0 L908.8,255.3 M977.7,573.7 L994.8,573.0 M818.2,389.9 L795.9,370.4 M930.9,502.3 L878.5,514.2 M919.5,418.9 L917.0,423.1 M742.3,468.1 L748.8,476.3 M740.0,503.1 L726.0,494.8 M789.0,318.8 L797.8,344.7 M789.0,318.8 L826.0,323.0 M919.9,453.5 L916.2,429.3 M889.2,421.4 L897.1,433.8 M938.3,375.8 L961.5,378.0 M926.0,419.8 L925.8,418.6 M825.9,472.0 L816.9,493.8 M931.6,416.8 L931.9,419.9 M931.6,416.8 L936.5,418.8 M712.0,457.5 L717.6,466.2 M1004.8,331.9 L988.0,312.4 M862.9,242.0 L855.4,258.7 M822.6,268.0 L831.0,260.7 M924.4,418.2 L923.1,417.0 M760.0,523.8 L740.0,503.1 M876.2,395.2 L875.5,412.2 M912.0,330.4 L956.9,316.5 M1025.2,587.8 L1019.1,576.7 M705.4,429.5 L724.0,396.0 M878.5,514.2 L910.7,536.0 M875.5,412.2 L858.0,407.6 M849.9,349.8 L797.8,344.7 M922.8,411.1 L931.0,406.4 M849.9,349.8 L826.0,323.0 M954.6,268.7 L1000.5,282.1 M686.8,463.0 L707.3,479.5 M1072.6,538.1 L1063.7,517.9 M747.5,485.8 L748.8,476.3 M812.2,462.7 L784.6,496.8 M929.4,411.2 L934.6,414.2 M929.4,418.3 L931.9,419.9 M1017.6,304.8 L1043.2,344.7 M851.9,551.1 L805.9,537.4 M848.4,499.3 L816.9,493.8 M1091.2,504.3 L1039.4,500.7 M809.9,424.0 L768.5,436.4 M929.3,422.5 L928.8,426.1 M742.6,362.5 L761.2,329.1 M875.5,412.2 L889.2,421.4 M787.5,517.2 L816.9,493.8 M928.6,414.5 L931.6,416.8 M1015.1,429.1 L999.2,455.2 M928.6,414.5 L934.6,414.2 M1065.1,318.7 L1112.6,332.5 M821.6,277.5 L822.6,268.0 M928.1,387.2 L931.0,406.4 M1009.1,360.7 L1043.2,344.7 M1072.6,538.1 L1044.4,552.8 M938.3,375.8 L928.1,387.2 M969.4,337.9 L988.0,312.4 M938.3,375.8 L955.5,391.0 M924.6,419.3 L923.6,420.6 M1050.1,399.8 L1082.0,395.3" stroke="#040a02" stroke-width="1.1" fill="none" stroke-linecap="round"/></g>
<path d="M668.2,496.5 L668.6,512.3 M668.2,496.5 L714.6,525.8 M1035.5,605.6 L1036.7,620.4 M1035.5,605.6 L1055.3,586.9 M714.1,510.1 L714.6,525.8 M714.1,510.1 L760.6,539.3 M1054.1,571.8 L1055.3,586.9 M1054.1,571.8 L1073.9,553.5 M760.0,523.8 L760.6,539.3 M760.0,523.8 L806.6,552.8 M1072.6,538.1 L1073.9,553.5 M1072.6,538.1 L1092.5,520.0 M805.9,537.4 L806.6,552.8 M805.9,537.4 L852.7,566.3 M1091.2,504.3 L1092.5,520.0 M1091.2,504.3 L1111.2,486.6 M851.9,551.0 L852.7,566.3 M851.9,551.0 L898.7,579.9 M1109.8,470.6 L1111.2,486.6 M1109.8,470.6 L1129.8,453.1 M897.8,564.7 L898.7,579.9 M897.8,564.7 L944.7,593.4 M1128.3,436.8 L1129.8,453.1 M1128.3,436.8 L1148.4,419.7 M943.7,578.3 L944.7,593.4 M943.7,578.3 L990.7,606.9 M1146.9,403.0 L1148.4,419.7 M1146.9,403.0 L1167.0,386.2 M989.6,592.0 L990.7,606.9 M989.6,592.0 L1036.7,620.4 M1165.4,369.3 L1167.0,386.2 M1165.4,369.3 L1185.6,352.8 M1035.5,605.6 L1036.7,620.4 M1184.0,335.5 L1185.6,352.8" stroke="#0a1405" stroke-width="0.9" fill="none"/>
<path d="M668.2,496.5 L817.0,228.6 L1184.0,335.5" stroke="#0a1405" stroke-width="1" fill="none"/>
<path d="M668.6,512.3 L1036.7,620.4 L1185.6,352.8" stroke="#0a1405" stroke-width="1" fill="none"/>
<path d="M668.2,497.3 L1035.5,606.4" stroke="#050a03" stroke-width="2.4" fill="none" stroke-linecap="round"/>
<path d="M1036.8,606.2 L1185.3,336.7" stroke="#050a03" stroke-width="3" fill="none" stroke-linecap="round"/>
<path d="M692.6,490.6 L827.4,247.8 L1159.9,344.8" stroke="#0a1606" stroke-width="2.1" fill="none" stroke-linejoin="miter"/>
<path d="M1159.8,343.2 L1025.2,587.8 L692.5,489.0" stroke="#040a02" stroke-width="1.1" fill="none"/>
<path d="M938.3,375.8 L935.6,379.9 L932.2,383.7 L928.1,387.2 L923.5,390.2 L918.3,392.8 L912.7,394.9 L906.8,396.4 L900.7,397.3 L894.5,397.7 L888.2,397.4 L882.1,396.6 L876.2,395.2 L870.6,393.2 L865.3,390.7 L860.6,387.7 L856.5,384.3 L853.0,380.6 L850.1,376.5 L848.1,372.2 L846.8,367.7 L846.4,363.2 L846.7,358.6 L847.9,354.2 L849.9,349.8 L852.6,345.7 L856.0,341.9 L860.1,338.4 L864.8,335.4 L869.9,332.8 L875.5,330.7 L881.4,329.2 L887.5,328.3 L893.7,327.9 L900.0,328.2 L906.1,329.0 L912.0,330.4 L917.6,332.4 L922.9,334.9 L927.6,337.8 L931.7,341.2 L935.2,345.0 L938.0,349.1 L940.1,353.4 L941.4,357.8 L941.8,362.4 L941.5,366.9 L940.3,371.4Z" stroke="#050c03" stroke-width="1.5" fill="none"/>
<path d="M1047.0,408.4 L1044.3,412.5 L1040.9,416.3 L1036.8,419.8 L1032.2,422.9 L1027.0,425.5 L1021.4,427.5 L1015.5,429.1 L1009.4,430.0 L1003.2,430.4 L997.0,430.1 L990.8,429.3 L984.9,427.9 L979.3,425.9 L974.1,423.4 L969.3,420.4 L965.2,417.0 L961.7,413.2 L958.9,409.2 L956.8,404.8 L955.5,400.4 L955.1,395.8 L955.4,391.3 L956.6,386.8 L958.6,382.4 L961.3,378.3 L964.7,374.5 L968.8,371.0 L973.4,368.0 L978.6,365.4 L984.2,363.3 L990.1,361.8 L996.2,360.8 L1002.4,360.5 L1008.6,360.7 L1014.8,361.5 L1020.7,362.9 L1026.3,364.9 L1031.5,367.4 L1036.3,370.4 L1040.4,373.8 L1043.9,377.5 L1046.7,381.6 L1048.8,385.9 L1050.1,390.4 L1050.5,395.0 L1050.2,399.5 L1049.0,404.0Z" stroke="#050c03" stroke-width="1.5" fill="none"/>
<path d="M894.9,455.2 L892.2,459.3 L888.8,463.1 L884.7,466.6 L880.1,469.6 L874.9,472.2 L869.3,474.2 L863.4,475.7 L857.3,476.7 L851.1,477.0 L844.8,476.8 L838.7,475.9 L832.8,474.5 L827.2,472.5 L821.9,470.0 L817.2,467.0 L813.1,463.6 L809.5,459.8 L806.7,455.7 L804.7,451.4 L803.4,447.0 L803.0,442.4 L803.3,437.9 L804.5,433.4 L806.5,429.0 L809.2,424.9 L812.6,421.1 L816.7,417.7 L821.3,414.6 L826.5,412.1 L832.1,410.0 L838.0,408.5 L844.1,407.6 L850.3,407.2 L856.6,407.5 L862.7,408.3 L868.6,409.7 L874.2,411.7 L879.5,414.2 L884.2,417.2 L888.3,420.6 L891.8,424.3 L894.7,428.4 L896.7,432.7 L898.0,437.2 L898.4,441.8 L898.1,446.3 L896.9,450.8Z" stroke="#050c03" stroke-width="1.5" fill="none"/>
<path d="M1002.9,486.9 L1000.2,491.0 L996.8,494.8 L992.7,498.3 L988.1,501.3 L982.9,503.9 L977.3,506.0 L971.4,507.5 L965.3,508.4 L959.1,508.8 L952.9,508.5 L946.7,507.7 L940.8,506.3 L935.2,504.3 L930.0,501.8 L925.2,498.8 L921.1,495.4 L917.6,491.6 L914.7,487.5 L912.7,483.2 L911.4,478.7 L911.0,474.1 L911.3,469.6 L912.5,465.1 L914.5,460.7 L917.2,456.6 L920.6,452.8 L924.7,449.3 L929.3,446.3 L934.5,443.7 L940.1,441.6 L946.0,440.1 L952.1,439.2 L958.3,438.8 L964.5,439.1 L970.7,439.9 L976.6,441.3 L982.2,443.3 L987.4,445.8 L992.2,448.8 L996.3,452.2 L999.8,456.0 L1002.6,460.1 L1004.7,464.4 L1006.0,468.9 L1006.4,473.4 L1006.1,478.0 L1004.9,482.5Z" stroke="#050c03" stroke-width="1.5" fill="none"/>
<path d="M861.6,279.4 L860.4,281.2 L858.9,282.9 L857.1,284.4 L855.1,285.8 L852.8,286.9 L850.3,287.8 L847.7,288.5 L845.0,288.9 L842.3,289.1 L839.5,289.0 L836.8,288.6 L834.2,288.0 L831.7,287.1 L829.4,286.0 L827.3,284.7 L825.5,283.2 L823.9,281.5 L822.7,279.8 L821.8,277.9 L821.2,275.9 L821.0,273.9 L821.2,271.9 L821.7,269.9 L822.6,268.0 L823.8,266.2 L825.3,264.5 L827.1,263.0 L829.1,261.6 L831.4,260.5 L833.9,259.6 L836.5,258.9 L839.2,258.5 L841.9,258.3 L844.7,258.4 L847.4,258.8 L850.0,259.4 L852.5,260.3 L854.8,261.4 L856.9,262.7 L858.7,264.2 L860.3,265.8 L861.5,267.6 L862.4,269.5 L863.0,271.5 L863.2,273.5 L863.0,275.5 L862.5,277.5Z" stroke="#050c03" stroke-width="1.5" fill="none"/>
<path d="M1143.4,362.1 L1142.2,363.9 L1140.7,365.6 L1138.9,367.2 L1136.9,368.5 L1134.6,369.7 L1132.1,370.6 L1129.5,371.3 L1126.8,371.7 L1124.1,371.8 L1121.3,371.7 L1118.6,371.4 L1116.0,370.8 L1113.5,369.9 L1111.2,368.8 L1109.1,367.5 L1107.3,366.0 L1105.7,364.3 L1104.5,362.5 L1103.6,360.6 L1103.0,358.6 L1102.8,356.6 L1103.0,354.6 L1103.5,352.6 L1104.4,350.7 L1105.6,348.9 L1107.1,347.2 L1108.9,345.6 L1110.9,344.3 L1113.2,343.1 L1115.7,342.2 L1118.3,341.5 L1121.0,341.1 L1123.7,341.0 L1126.5,341.1 L1129.2,341.4 L1131.8,342.0 L1134.3,342.9 L1136.6,344.0 L1138.7,345.3 L1140.5,346.8 L1142.1,348.5 L1143.3,350.3 L1144.2,352.2 L1144.8,354.2 L1145.0,356.2 L1144.8,358.2 L1144.3,360.2Z" stroke="#050c03" stroke-width="1.5" fill="none"/>
<path d="M747.7,485.3 L746.5,487.1 L745.0,488.8 L743.2,490.3 L741.2,491.6 L738.9,492.8 L736.4,493.7 L733.8,494.3 L731.1,494.8 L728.4,494.9 L725.6,494.8 L722.9,494.4 L720.3,493.8 L717.8,492.9 L715.5,491.8 L713.4,490.5 L711.6,489.0 L710.0,487.3 L708.8,485.5 L707.9,483.6 L707.3,481.6 L707.1,479.6 L707.3,477.6 L707.8,475.6 L708.7,473.7 L709.9,471.9 L711.4,470.2 L713.2,468.7 L715.2,467.4 L717.5,466.2 L720.0,465.3 L722.6,464.7 L725.3,464.3 L728.0,464.1 L730.8,464.2 L733.5,464.6 L736.1,465.2 L738.6,466.1 L740.9,467.2 L743.0,468.5 L744.8,470.0 L746.4,471.7 L747.6,473.5 L748.5,475.4 L749.1,477.4 L749.3,479.4 L749.1,481.4 L748.6,483.4Z" stroke="#050c03" stroke-width="1.5" fill="none"/>
<path d="M1029.9,568.4 L1028.7,570.2 L1027.2,571.9 L1025.4,573.4 L1023.4,574.8 L1021.1,575.9 L1018.6,576.8 L1016.0,577.5 L1013.3,577.9 L1010.6,578.1 L1007.8,578.0 L1005.1,577.6 L1002.5,577.0 L1000.0,576.1 L997.7,575.0 L995.6,573.6 L993.8,572.1 L992.2,570.5 L991.0,568.7 L990.1,566.7 L989.5,564.8 L989.3,562.7 L989.5,560.7 L990.0,558.7 L990.9,556.8 L992.1,555.0 L993.6,553.3 L995.4,551.8 L997.4,550.4 L999.7,549.3 L1002.2,548.4 L1004.8,547.7 L1007.5,547.3 L1010.2,547.1 L1013.0,547.2 L1015.7,547.6 L1018.3,548.2 L1020.8,549.1 L1023.1,550.2 L1025.2,551.6 L1027.0,553.1 L1028.6,554.7 L1029.8,556.5 L1030.7,558.5 L1031.3,560.4 L1031.5,562.5 L1031.3,564.5 L1030.8,566.5Z" stroke="#050c03" stroke-width="1.5" fill="none"/>
<path d="M812.4,222.8 L817.2,229.0 L822.4,222.4Z" fill="#7a0f2a"/><ellipse cx="816.7" cy="217.9" rx="8.6" ry="5.9" fill="#d2103f"/><path d="M812.0,195.6 L813.2,220.0 Q816.5,221.4 819.8,220.0 L819.0,195.6Z" fill="url(#shaft)"/><ellipse cx="815.5" cy="195.6" rx="3.5" ry="2.3" fill="#d8123f"/>
<path d="M934.7,258.4 L939.5,264.6 L944.7,258.0Z" fill="#7a0f2a"/><ellipse cx="939.0" cy="253.5" rx="8.6" ry="5.9" fill="#d2103f"/><path d="M934.3,231.2 L935.5,255.6 Q938.8,257.0 942.1,255.6 L941.3,231.2Z" fill="url(#shaft)"/><ellipse cx="937.8" cy="231.2" rx="3.5" ry="2.3" fill="#d8123f"/>
<path d="M1057.1,294.1 L1061.9,300.3 L1067.1,293.7Z" fill="#7a0f2a"/><ellipse cx="1061.4" cy="289.2" rx="8.6" ry="5.9" fill="#d2103f"/><path d="M1056.7,266.9 L1057.9,291.3 Q1061.2,292.7 1064.5,291.3 L1063.7,266.9Z" fill="url(#shaft)"/><ellipse cx="1060.2" cy="266.9" rx="3.5" ry="2.3" fill="#d8123f"/>
<path d="M762.8,312.1 L767.6,318.3 L772.8,311.7Z" fill="#7a0f2a"/><ellipse cx="767.1" cy="307.2" rx="8.6" ry="5.9" fill="#d2103f"/><path d="M762.4,284.9 L763.6,309.3 Q766.9,310.7 770.2,309.3 L769.4,284.9Z" fill="url(#shaft)"/><ellipse cx="765.9" cy="284.9" rx="3.5" ry="2.3" fill="#d8123f"/>
<path d="M1179.4,329.7 L1184.2,335.9 L1189.4,329.3Z" fill="#7a0f2a"/><ellipse cx="1183.7" cy="324.8" rx="8.6" ry="5.9" fill="#d2103f"/><path d="M1179.0,302.5 L1180.2,326.9 Q1183.5,328.3 1186.8,326.9 L1186.0,302.5Z" fill="url(#shaft)"/><ellipse cx="1182.5" cy="302.5" rx="3.5" ry="2.3" fill="#d8123f"/>
<path d="M713.2,401.4 L718.0,407.6 L723.2,401.0Z" fill="#7a0f2a"/><ellipse cx="717.5" cy="396.5" rx="8.6" ry="5.9" fill="#d2103f"/><path d="M712.8,374.2 L714.0,398.6 Q717.3,400.0 720.6,398.6 L719.8,374.2Z" fill="url(#shaft)"/><ellipse cx="716.3" cy="374.2" rx="3.5" ry="2.3" fill="#d8123f"/>
<path d="M1129.9,419.7 L1134.7,425.9 L1139.9,419.3Z" fill="#7a0f2a"/><ellipse cx="1134.2" cy="414.8" rx="8.6" ry="5.9" fill="#d2103f"/><path d="M1129.5,392.5 L1130.7,416.9 Q1134.0,418.3 1137.3,416.9 L1136.5,392.5Z" fill="url(#shaft)"/><ellipse cx="1133.0" cy="392.5" rx="3.5" ry="2.3" fill="#d8123f"/>
<path d="M663.6,490.7 L668.4,496.9 L673.6,490.3Z" fill="#7a0f2a"/><ellipse cx="667.9" cy="485.8" rx="8.6" ry="5.9" fill="#d2103f"/><path d="M663.2,463.5 L664.4,487.9 Q667.7,489.3 671.0,487.9 L670.2,463.5Z" fill="url(#shaft)"/><ellipse cx="666.7" cy="463.5" rx="3.5" ry="2.3" fill="#d8123f"/>
<path d="M1080.4,509.8 L1085.2,516.0 L1090.4,509.4Z" fill="#7a0f2a"/><ellipse cx="1084.7" cy="504.9" rx="8.6" ry="5.9" fill="#d2103f"/><path d="M1080.0,482.6 L1081.2,507.0 Q1084.5,508.4 1087.8,507.0 L1087.0,482.6Z" fill="url(#shaft)"/><ellipse cx="1083.5" cy="482.6" rx="3.5" ry="2.3" fill="#d8123f"/>
<path d="M786.0,527.1 L790.8,533.3 L796.0,526.7Z" fill="#7a0f2a"/><ellipse cx="790.3" cy="522.2" rx="8.6" ry="5.9" fill="#d2103f"/><path d="M785.6,499.9 L786.8,524.3 Q790.1,525.7 793.4,524.3 L792.6,499.9Z" fill="url(#shaft)"/><ellipse cx="789.1" cy="499.9" rx="3.5" ry="2.3" fill="#d8123f"/>
<path d="M908.5,563.4 L913.3,569.6 L918.5,563.0Z" fill="#7a0f2a"/><ellipse cx="912.8" cy="558.5" rx="8.6" ry="5.9" fill="#d2103f"/><path d="M908.1,536.2 L909.3,560.6 Q912.6,562.0 915.9,560.6 L915.1,536.2Z" fill="url(#shaft)"/><ellipse cx="911.6" cy="536.2" rx="3.5" ry="2.3" fill="#d8123f"/>
<path d="M1030.9,599.8 L1035.7,606.0 L1040.9,599.4Z" fill="#7a0f2a"/><ellipse cx="1035.2" cy="594.9" rx="8.6" ry="5.9" fill="#d2103f"/><path d="M1030.5,572.6 L1031.7,597.0 Q1035.0,598.4 1038.3,597.0 L1037.5,572.6Z" fill="url(#shaft)"/><ellipse cx="1034.0" cy="572.6" rx="3.5" ry="2.3" fill="#d8123f"/>
</svg>
<div id="clip">
<div class="btn" style="left:168px;top:18px;width:78px;height:23px;border-color:#17191b;box-shadow:inset 0 0 0 1px #5b5f63"></div>
<svg style="position:absolute;left:183px;top:23px" width="14" height="14" viewBox="0 0 14 14"><circle cx="7" cy="7" r="6.1" fill="#da4453"/><path d="M4.3 4.3 L9.7 9.7 M9.7 4.3 L4.3 9.7" stroke="#4a343c" stroke-width="0.9" fill="none"/></svg>
<div id="panel"></div>
<div id="titlebar"></div>
<svg style="position:absolute;left:10px;top:63px" width="16" height="18" viewBox="0 0 16 18">
<path d="M9.9 7.4 l1.3 -.6 .8 1.1 1.4 -.1 .2 1.4 1.2 .7 -.6 1.3 .6 1.2 -1.1 .8 0 1.4 -1.4 .2 -.7 1.2 -1.3 -.6 -1.2 .6 -.8 -1.1 -1.4 .1 -.2 -1.4 -1.2 -.7 .6 -1.3 Z" fill="#4288e6" opacity="0.9"/>
<path d="M1.2 3.8 L4 1.1 L14.9 1.1 L14.5 3.3 L12.1 6.1 L12 4 L3.9 4 L3.9 14.2 L5.6 14.1 L2.6 16.6 L1.3 16.8 Z" fill="#d82424"/>
<path d="M11.9 4 L14.9 1.1 L14.5 3.3 L12.1 6.2 Z" fill="#ff4a4a"/>
<path d="M1.3 14.4 L3.9 14.2 L5.6 14.1 L2.6 16.6 L1.3 16.8 Z" fill="#ff4a4a"/>
<path d="M3.85 4 L11.9 4 L11.9 6.3 L7.1 6.3 L7.1 7.8 L10.2 7.8 L10.2 10.7 L7.1 10.7 L7.1 14.1 L3.85 14.1 Z" fill="#ffffff"/>
</svg>
<div class="gb" style="top:121px;height:317px"></div>
<div class="gb" style="top:466px;height:108px"></div>
<div class="gb" style="top:602px;height:107px"></div>
<i class="rd" style="left:32px;top:135px"></i>
<i class="rd" style="left:32px;top:162px"></i>
<i class="rd" style="left:211px;top:162px"><b></b></i>
<i class="rd" style="left:32px;top:191px"></i>
<i class="rd" style="left:211px;top:191px"></i>
<i class="rd" style="left:32px;top:220px"></i>
<i class="rd" style="left:211px;top:220px"></i>
<i class="rd" style="left:32px;top:249px"></i>
<i class="rd" style="left:211px;top:249px"></i>
<i class="rd dis" style="left:32.25px;top:278.25px"></i>
<i class="rd dis" style="left:211.25px;top:278.25px"></i>
<i class="rd dis" style="left:32.25px;top:307.25px"></i>
<i class="rd dis" style="left:211.25px;top:307.25px"></i>
<div class="inp" style="left:66px;top:332px;width:300px;height:28px"></div>
<div class="inp" style="left:66px;top:367px;width:300px;height:28px"></div>
<div class="btn" style="left:67px;top:402px;width:300px;height:22px"></div>
<div style="position:absolute;left:32px;top:481.5px;width:13px;height:13px;background:#1b1e20;border-radius:1px"></div>
<div style="position:absolute;left:95px;top:482px;width:260px;height:13px;background:#3b3f43"></div>
<div style="position:absolute;left:95px;top:482px;width:13px;height:13px;background:#404448;box-shadow:inset 0 0 0 1px #4d5155"></div>
<svg style="position:absolute;left:95px;top:482px" width="13" height="13"><path d="M8.2 3.2 L4.6 6.5 L8.2 9.8 Z" fill="#5f6468"/></svg>
<div style="position:absolute;left:109px;top:482px;width:26px;height:13px;background:#43474b;box-shadow:inset 0 0 0 1px #52565a"></div>
<div class="inp" style="left:211px;top:507px;width:200px;height:23px"></div>
<div class="inp" style="left:211px;top:538px;width:200px;height:23px"></div>
<div class="btn" style="left:33px;top:613px;width:340px;height:21px"></div>
<div style="position:absolute;left:32px;top:643px;width:340px;height:53.8px;background:#1b1e20"></div>
<span class="t" id="t_close" style="left:200.5px;top:23.0px;color:#eff0f1;letter-spacing:-0.750px;">Close</span>
<span class="t" id="t_title" style="left:28.5px;top:65.2px;color:#ffffff;letter-spacing:-0.399px;font-weight:bold;">Show result</span>
<span class="t" id="t_rt" style="left:22.1px;top:103.4px;color:#eff0f1;letter-spacing:-0.295px;">Result type</span>
<span class="t" id="t_none" style="left:52.4px;top:135.1px;color:#eff0f1;letter-spacing:-0.270px;">None</span>
<span class="t" id="t_dm" style="left:52.3px;top:162.1px;color:#eff0f1;letter-spacing:-0.117px;">Displacement Magnitude</span>
<span class="t" id="t_vm" style="left:231.3px;top:162.1px;color:#eff0f1;letter-spacing:-0.387px;">von Mises Stress</span>
<span class="t" id="t_dx" style="left:52.3px;top:191.1px;color:#eff0f1;letter-spacing:-0.310px;">Displacement X</span>
<span class="t" id="t_mps" style="left:231.3px;top:191.1px;color:#eff0f1;letter-spacing:-0.348px;">Max Principal Stress</span>
<span class="t" id="t_dy" style="left:52.3px;top:220.1px;color:#eff0f1;letter-spacing:-0.308px;">Displacement Y</span>
<span class="t" id="t_mips" style="left:231.3px;top:220.1px;color:#eff0f1;letter-spacing:-0.348px;">Min Principal Stress</span>
<span class="t" id="t_dz" style="left:52.3px;top:249.1px;color:#eff0f1;letter-spacing:-0.287px;">Displacement Z</span>
<span class="t" id="t_mss" style="left:231.3px;top:249.1px;color:#eff0f1;letter-spacing:-0.348px;">Max Shear Stress (Tresca)</span>
<span class="t" id="t_eps" style="left:52.3px;top:278.1px;color:#6c7175;letter-spacing:-0.280px;">Equivalent Plastic Strain</span>
<span class="t" id="t_mfr" style="left:231.3px;top:278.1px;color:#6c7175;letter-spacing:-0.543px;">Mass Flow Rate</span>
<span class="t" id="t_temp" style="left:52.3px;top:307.1px;color:#6c7175;letter-spacing:-0.080px;">Temperature</span>
<span class="t" id="t_np" style="left:231.3px;top:307.1px;color:#6c7175;letter-spacing:-0.220px;">Network Pressure</span>
<span class="t" id="t_min" style="left:32.3px;top:339.2px;color:#eff0f1;letter-spacing:-0.066px;">Min:</span>
<span class="t" id="t_max" style="left:32.3px;top:374.2px;color:#eff0f1;letter-spacing:-0.443px;">Max:</span>
<span class="t" id="t_minv" style="left:69.7px;top:339.2px;color:#eff0f1;letter-spacing:-0.592px;">7269.22 Pa</span>
<span class="t" id="t_maxv" style="left:69.7px;top:374.2px;color:#eff0f1;letter-spacing:-0.574px;">1314.28 kPa</span>
<span class="t" id="t_hist" style="left:195.0px;top:407.1px;color:#eff0f1;letter-spacing:-0.072px;">Histogram</span>
<span class="t" id="t_disp" style="left:22.1px;top:448.4px;color:#eff0f1;letter-spacing:-0.164px;">Displacement</span>
<span class="t" id="t_show" style="left:51.3px;top:481.2px;color:#eff0f1;letter-spacing:-0.583px;">Show</span>
<span class="t" id="t_fac" style="left:32.3px;top:511.2px;color:#6c7175;letter-spacing:-0.367px;">Factor:</span>
<span class="t" id="t_smax" style="left:32.3px;top:542.1px;color:#6c7175;letter-spacing:-0.248px;">Slider max:</span>
<span class="t" id="t_facv" style="left:216.6px;top:511.2px;color:#eff0f1;letter-spacing:-0.726px;">0.0</span>
<span class="t" id="t_smaxv" style="left:216.6px;top:542.1px;color:#eff0f1;letter-spacing:-0.529px;">100.0</span>
<span class="t" id="t_ude" style="left:21.8px;top:583.1px;color:#eff0f1;letter-spacing:-0.095px;">User defined equation</span>
<span class="t" id="t_calc" style="left:181.9px;top:617.2px;color:#eff0f1;letter-spacing:-0.334px;">Calculate</span>
<span class="t" id="t_eq" style="left:36.4px;top:648.4px;color:#eff0f1;letter-spacing:-0.358px;">P1 - P3 # Max - Min Principal Stress</span>
</div>
</body></html>
